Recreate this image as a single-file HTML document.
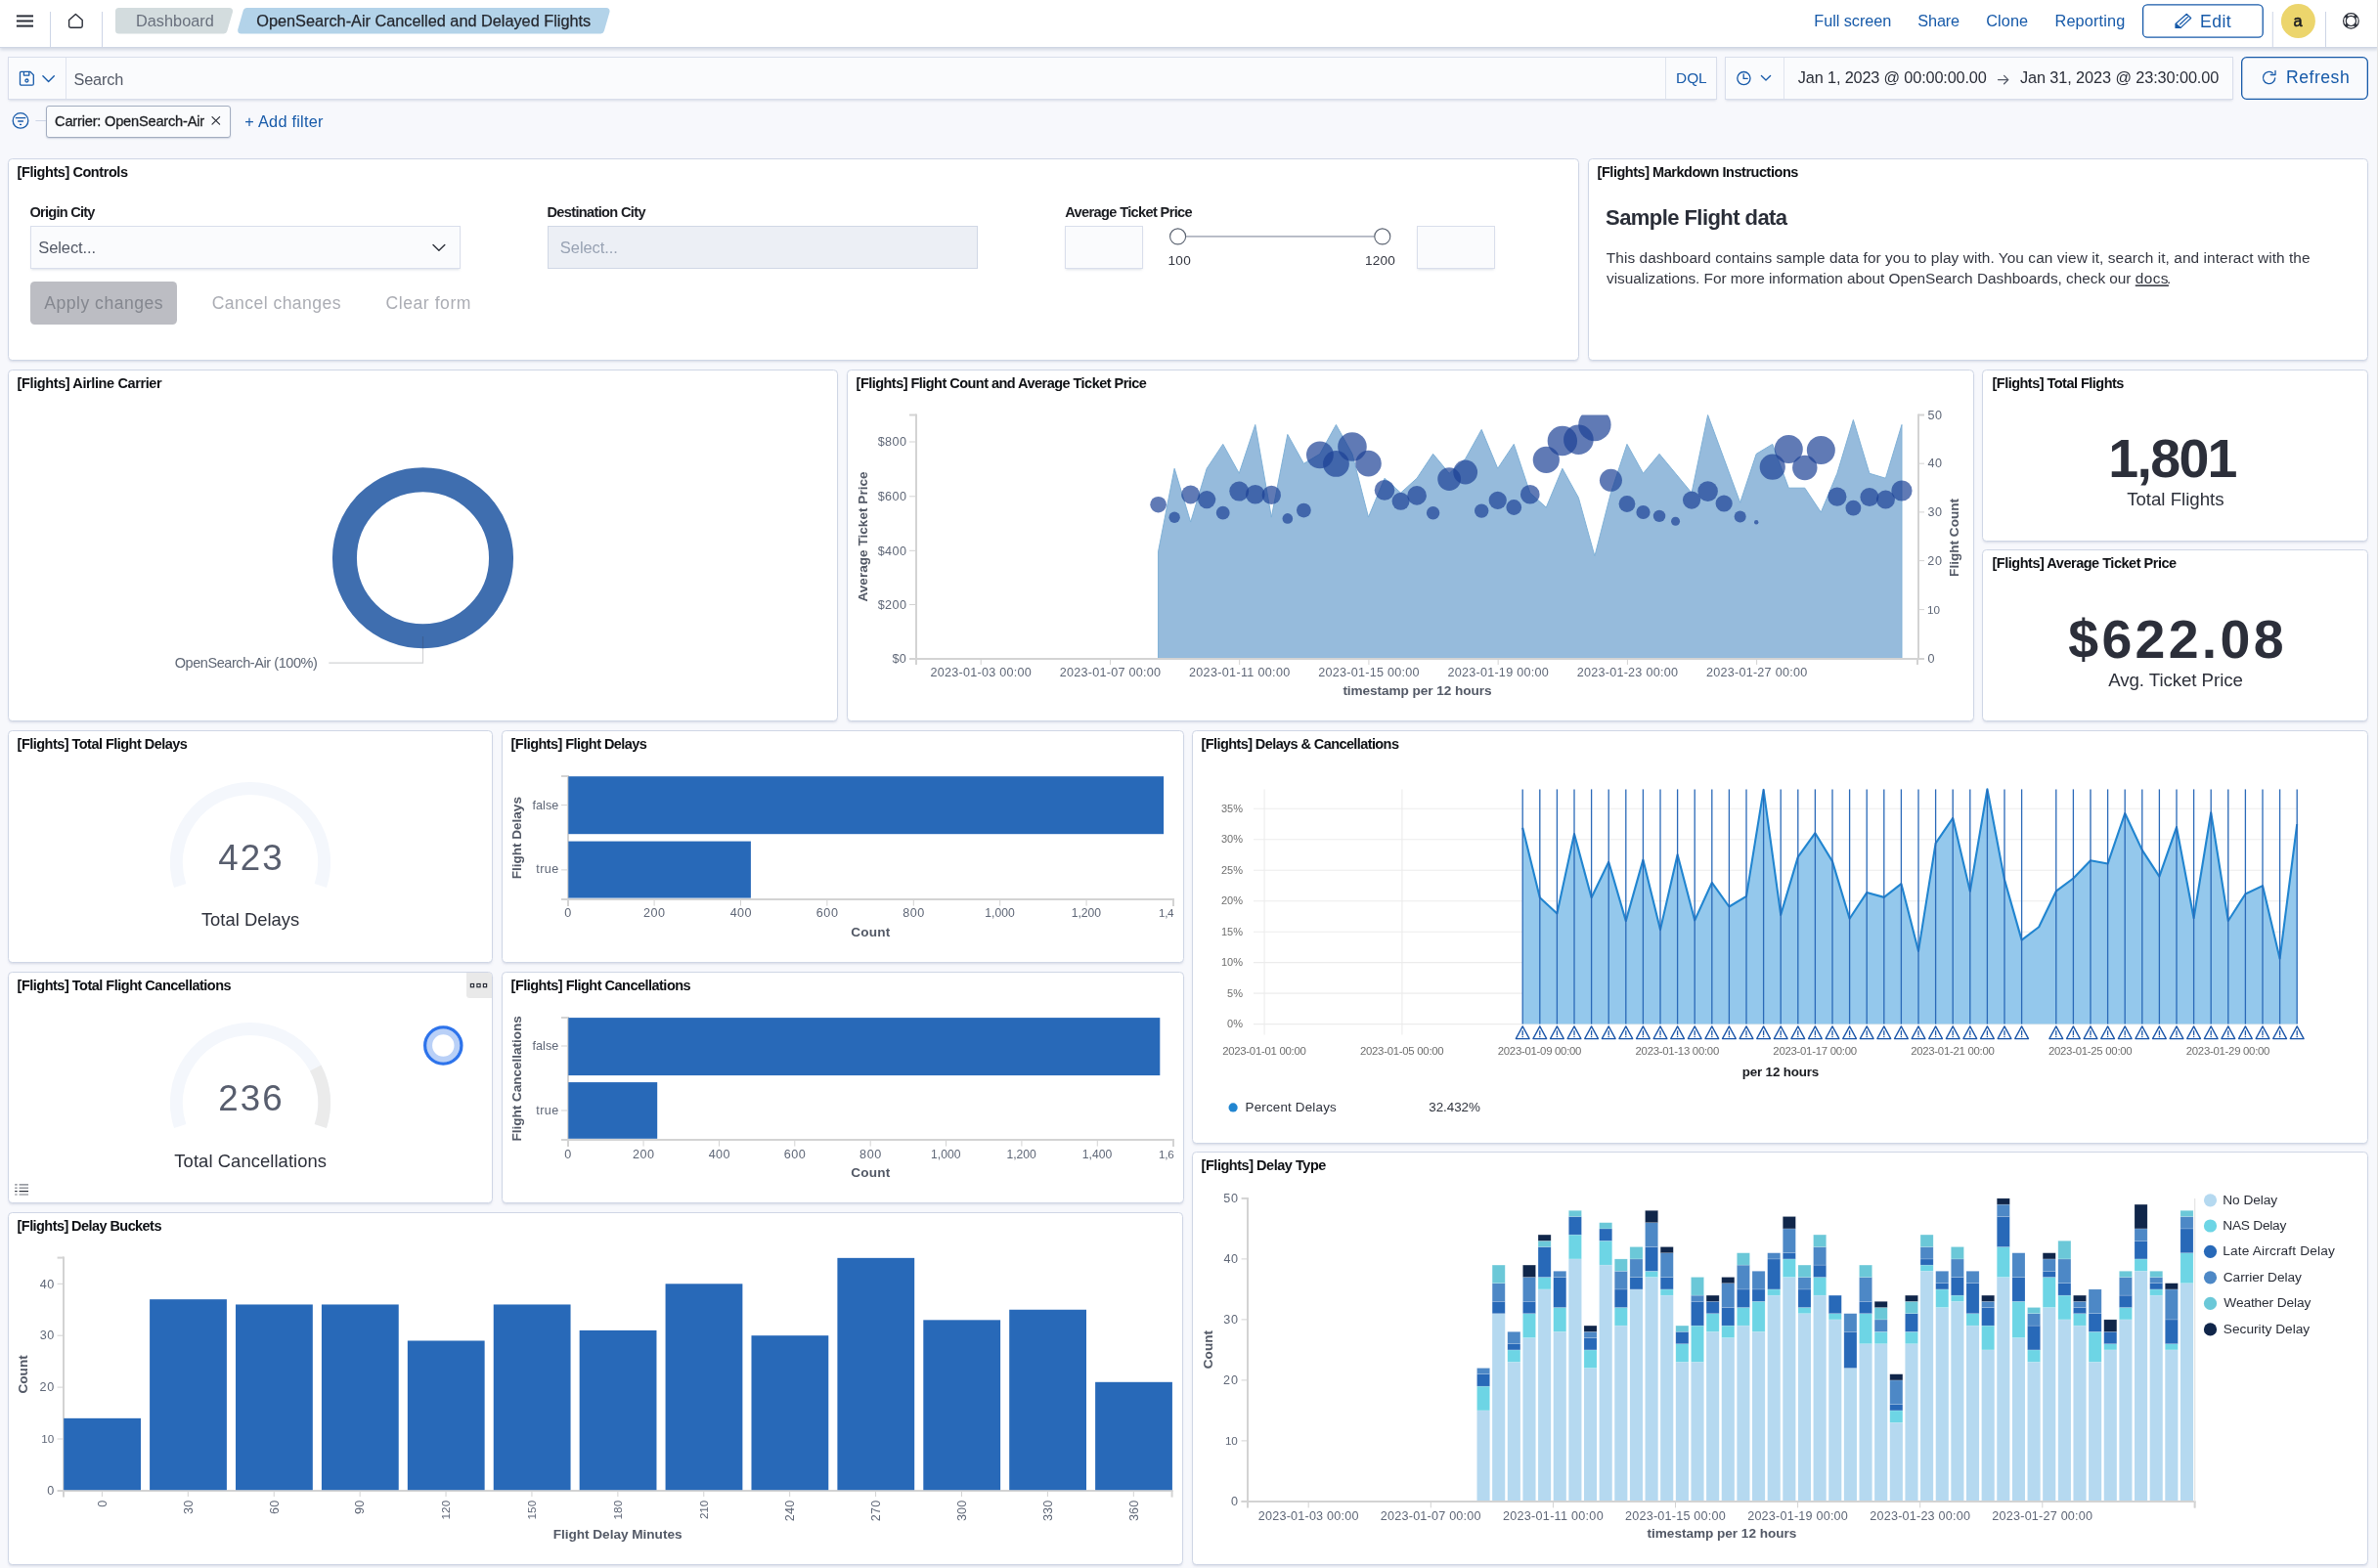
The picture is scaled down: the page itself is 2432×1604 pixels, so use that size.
<!DOCTYPE html>
<html lang="en"><head><meta charset="utf-8"><title>OpenSearch-Air Cancelled and Delayed Flights - OpenSearch Dashboards</title>
<style>
*{box-sizing:border-box;margin:0;padding:0}
html,body{width:2432px;height:1604px;overflow:hidden;background:#f7f8fc;font-family:"Liberation Sans",Arial,sans-serif}
#root{position:relative;width:2432px;height:1604px;overflow:hidden;background:#f7f8fc}
.abs{position:absolute}
.hdr{position:absolute;left:0;top:0;width:2432px;height:49px;background:#fff;border-bottom:1px solid #cfd6e4;box-shadow:0 2px 3px rgba(120,135,165,.28)}
.panel{position:absolute;background:#fff;border:1px solid #cfd6e5;border-radius:4.5px;box-shadow:0 2px 2.5px -1px rgba(110,125,160,.25)}
.inp{position:absolute;background:#fafbfd;border:1px solid #d9deeb;box-shadow:0 2px 2.5px -1px rgba(110,125,160,.24)}
svg text{font-family:"Liberation Sans",Arial,sans-serif}
#ov{position:absolute;left:0;top:0;will-change:transform;transform:translateZ(0)}
</style></head>
<body><div id="root">
<div class="hdr"></div>
<div class="inp" style="left:8px;top:58px;width:1748px;height:44px;"></div>
<div class="inp" style="left:1764px;top:58px;width:520px;height:44px;"></div>
<div class="abs" style="left:47px;top:108px;width:189px;height:33px;background:#fafbfd;border:1px solid #a3adc0;border-radius:3px;box-shadow:0 1px 1.5px rgba(120,135,165,.3)"></div>
<div class="panel" style="left:8px;top:162px;width:1607px;height:207px;"></div>
<div class="panel" style="left:1624px;top:162px;width:798px;height:207px;"></div>
<div class="panel" style="left:8px;top:378px;width:849px;height:360px;"></div>
<div class="panel" style="left:866px;top:378px;width:1153px;height:360px;"></div>
<div class="panel" style="left:2027px;top:378px;width:395px;height:176px;"></div>
<div class="panel" style="left:2027px;top:562px;width:395px;height:176px;"></div>
<div class="panel" style="left:8px;top:747px;width:496px;height:238px;"></div>
<div class="panel" style="left:513px;top:747px;width:698px;height:238px;"></div>
<div class="panel" style="left:1219px;top:747px;width:1203px;height:423px;"></div>
<div class="panel" style="left:8px;top:994px;width:496px;height:237px;"></div>
<div class="panel" style="left:513px;top:994px;width:698px;height:237px;"></div>
<div class="panel" style="left:8px;top:1240px;width:1202px;height:361px;"></div>
<div class="panel" style="left:1219px;top:1178px;width:1203px;height:423px;"></div>
<div class="inp" style="left:31px;top:231px;width:440px;height:44px;"></div>
<div class="abs" style="left:560px;top:231px;width:440px;height:44px;background:#eceff5;border:1px solid #d0d7e5"></div>
<div class="inp" style="left:1089px;top:231px;width:80px;height:44px;"></div>
<div class="inp" style="left:1449px;top:231px;width:80px;height:44px;"></div>
<svg id="ov" width="2432" height="1604" viewBox="0 0 2432 1604">
<line x1="16.90" y1="16.40" x2="34.00" y2="16.40" stroke="#2a2e38" stroke-width="2"/>
<line x1="16.90" y1="21.50" x2="34.00" y2="21.50" stroke="#2a2e38" stroke-width="2"/>
<line x1="16.90" y1="26.60" x2="34.00" y2="26.60" stroke="#2a2e38" stroke-width="2"/>
<line x1="51.50" y1="12.00" x2="51.50" y2="48.00" stroke="#cdd5e6" stroke-width="1"/>
<line x1="104.50" y1="12.00" x2="104.50" y2="48.00" stroke="#cdd5e6" stroke-width="1"/>
<path d="M70.6 20.6 L77.4 14.6 L84.2 20.6 V26.6 Q84.2 28.2 82.6 28.2 H72.2 Q70.6 28.2 70.6 26.6 Z" fill="none" stroke="#2a2e38" stroke-width="1.4" stroke-linejoin="round"/>
<path d="M121.5 11.5 H234.55 L228.96 30.9 H121.5 Z" fill="#d3dcde" stroke="#d3dcde" stroke-width="7" stroke-linejoin="round"/>
<path d="M252.2 11.5 H620.05 L614.46 30.9 H246.65 Z" fill="#b3d3e9" stroke="#b3d3e9" stroke-width="7" stroke-linejoin="round"/>
<text x="138.90" y="27.10" font-size="16.3" letter-spacing="0.039" fill="#69707d">Dashboard</text>
<text x="262.27" y="27.10" font-size="16.3" letter-spacing="-0.005" stroke="#25282f" stroke-width="0.25" fill="#25282f">OpenSearch-Air Cancelled and Delayed Flights</text>
<text x="1855.30" y="26.90" font-size="16.3" letter-spacing="-0.058" fill="#175aa9">Full screen</text>
<text x="1961.37" y="26.90" font-size="16.3" letter-spacing="-0.163" fill="#175aa9">Share</text>
<text x="2031.28" y="26.90" font-size="16.3" letter-spacing="0.081" fill="#175aa9">Clone</text>
<text x="2101.50" y="26.90" font-size="16.3" letter-spacing="0.145" fill="#175aa9">Reporting</text>
<rect x="2191.6" y="4.8" width="122.6" height="33.4" rx="4.5" fill="#fff" stroke="#175aa9" stroke-width="1.3"/>
<g fill="none" stroke="#175aa9" stroke-width="1.15" stroke-linejoin="round" stroke-linecap="round"><path d="M2236.4 14.3 L2240.7 18.5 L2230.2 28.4 H2225.2 V24.2 Z"/><path d="M2229.4 25 L2238 16.9"/><path d="M2225.2 24.2 L2230.2 28.4 H2225.2 Z" fill="#175aa9"/></g>
<text x="2250.09" y="27.50" font-size="17.6" letter-spacing="0.393" fill="#175aa9">Edit</text>
<line x1="2324.30" y1="12.00" x2="2324.30" y2="48.00" stroke="#cdd5e6" stroke-width="1"/>
<circle cx="2350.40" cy="21.50" r="17.50" fill="#ecd56c"/>
<text x="2345.51" y="26.50" font-size="16.3" stroke="#1a1c21" stroke-width="0.55" fill="#1a1c21">a</text>
<line x1="2378.50" y1="12.00" x2="2378.50" y2="48.00" stroke="#cdd5e6" stroke-width="1"/>
<g fill="none" stroke="#2a2e38" stroke-width="1.2"><circle cx="2404.4" cy="21.4" r="7.8"/><circle cx="2404.4" cy="21.4" r="5.1"/><path d="M2400.55 17.55 L2399.1 16.1 M2408.25 17.55 L2409.7 16.1 M2400.55 25.25 L2399.1 26.7 M2408.25 25.25 L2409.7 26.7" stroke-width="3.4"/></g>
<rect x="2431.00" y="0.00" width="1.00" height="1604.00" fill="#e3e3e3"/>
<line x1="67.50" y1="59.00" x2="67.50" y2="101.00" stroke="#dfe4ee" stroke-width="1"/>
<line x1="1703.50" y1="59.00" x2="1703.50" y2="101.00" stroke="#dfe4ee" stroke-width="1"/>
<g transform="translate(19.8 72.7)" fill="none" stroke="#175aa9" stroke-width="1.3" stroke-linejoin="round"><path d="M1.8 0.7 H11.2 L14.5 4 V13 Q14.5 14.5 13 14.5 H2.2 Q0.7 14.5 0.7 13 V1.8 Q0.7 0.7 1.8 0.7 Z"/><path d="M4.6 0.7 V4.4 H10 V0.7"/><circle cx="7.6" cy="9.8" r="1.5"/></g>
<path d="M43.9 77.8 L49.6 83.4 L55.3 77.8" fill="none" stroke="#175aa9" stroke-width="1.4" stroke-linecap="round" stroke-linejoin="round"/>
<text x="75.57" y="87.00" font-size="16.3" letter-spacing="-0.176" fill="#535966">Search</text>
<text x="1714.07" y="85.00" font-size="15.4" letter-spacing="-0.026" fill="#175aa9">DQL</text>
<line x1="1824.50" y1="59.00" x2="1824.50" y2="101.00" stroke="#dfe4ee" stroke-width="1"/>
<g fill="none" stroke="#175aa9" stroke-width="1.3" stroke-linecap="round"><circle cx="1783.4" cy="80.1" r="6.6"/><path d="M1783.2 75.8 V80.4 H1787.2"/></g>
<path d="M1801.4 77.5 L1806 82 L1810.6 77.5" fill="none" stroke="#175aa9" stroke-width="1.3" stroke-linecap="round" stroke-linejoin="round"/>
<text x="1838.86" y="85.00" font-size="16.3" letter-spacing="-0.156" fill="#2a2e38">Jan 1, 2023 @ 00:00:00.00</text>
<path d="M2043.5 81.6 H2053.8 M2049.6 77.4 L2053.8 81.6 L2049.6 85.8" fill="none" stroke="#535966" stroke-width="1.3" stroke-linecap="round" stroke-linejoin="round"/>
<text x="2065.96" y="85.00" font-size="16.3" letter-spacing="-0.096" fill="#2a2e38">Jan 31, 2023 @ 23:30:00.00</text>
<rect x="2292.65" y="58.65" width="128.7" height="42.7" rx="5" fill="#f9fafd" stroke="#175aa9" stroke-width="1.3"/>
<g fill="none" stroke="#175aa9" stroke-width="1.3" stroke-linecap="round" stroke-linejoin="round"><path d="M2326.7 79.9 A6.1 6.1 0 1 1 2324.3 74.7"/><path d="M2327 72.3 V76.5 H2322.3"/></g>
<text x="2337.99" y="84.70" font-size="17.6" letter-spacing="0.518" fill="#175aa9">Refresh</text>
<g fill="none" stroke="#175aa9" stroke-width="1.3"><circle cx="21" cy="123.4" r="7.8"/><path d="M15.8 120.6 H26.3 M18.2 124 H23.9" /><path d="M20 127.4 H22.1" /></g>
<line x1="36.40" y1="123.50" x2="47.00" y2="123.50" stroke="#cdd5e6" stroke-width="1"/>
<text x="56.07" y="129.00" font-size="14.6" letter-spacing="-0.193" stroke="#1a1c21" stroke-width="0.3" fill="#1a1c21">Carrier: OpenSearch-Air</text>
<path d="M217 119.6 L224.6 127.2 M224.6 119.6 L217 127.2" fill="none" stroke="#2a2e38" stroke-width="1.2" stroke-linecap="round"/>
<text x="250.33" y="129.50" font-size="16.3" letter-spacing="0.250" fill="#175aa9">+ Add filter</text>
<text x="17.60" y="180.90" font-size="14.5" font-weight="700" letter-spacing="-0.438" fill="#0f1115">[Flights] Controls</text>
<text x="1633.60" y="180.90" font-size="14.5" font-weight="700" letter-spacing="-0.472" fill="#0f1115">[Flights] Markdown Instructions</text>
<text x="17.60" y="396.90" font-size="14.5" font-weight="700" letter-spacing="-0.391" fill="#0f1115">[Flights] Airline Carrier</text>
<text x="875.60" y="396.90" font-size="14.5" font-weight="700" letter-spacing="-0.532" fill="#0f1115">[Flights] Flight Count and Average Ticket Price</text>
<text x="2037.50" y="396.90" font-size="14.5" font-weight="700" letter-spacing="-0.521" fill="#0f1115">[Flights] Total Flights</text>
<text x="2037.50" y="580.90" font-size="14.5" font-weight="700" letter-spacing="-0.481" fill="#0f1115">[Flights] Average Ticket Price</text>
<text x="17.60" y="765.90" font-size="14.5" font-weight="700" letter-spacing="-0.529" fill="#0f1115">[Flights] Total Flight Delays</text>
<text x="522.60" y="765.90" font-size="14.5" font-weight="700" letter-spacing="-0.551" fill="#0f1115">[Flights] Flight Delays</text>
<text x="1228.60" y="765.90" font-size="14.5" font-weight="700" letter-spacing="-0.594" fill="#0f1115">[Flights] Delays &amp; Cancellations</text>
<text x="17.60" y="1012.90" font-size="14.5" font-weight="700" letter-spacing="-0.501" fill="#0f1115">[Flights] Total Flight Cancellations</text>
<text x="522.60" y="1012.90" font-size="14.5" font-weight="700" letter-spacing="-0.515" fill="#0f1115">[Flights] Flight Cancellations</text>
<text x="17.60" y="1258.90" font-size="14.5" font-weight="700" letter-spacing="-0.568" fill="#0f1115">[Flights] Delay Buckets</text>
<text x="1228.60" y="1196.90" font-size="14.5" font-weight="700" letter-spacing="-0.470" fill="#0f1115">[Flights] Delay Type</text>
<text x="30.52" y="221.50" font-size="14.6" font-weight="700" letter-spacing="-0.769" fill="#1a1c21">Origin City</text>
<text x="559.45" y="221.50" font-size="14.6" font-weight="700" letter-spacing="-0.668" fill="#1a1c21">Destination City</text>
<text x="1089.23" y="221.50" font-size="14.6" font-weight="700" letter-spacing="-0.647" fill="#1a1c21">Average Ticket Price</text>
<text x="39.26" y="259.00" font-size="16.5" letter-spacing="-0.085" fill="#535966">Select...</text>
<path d="M443 250.4 L448.9 256.2 L454.8 250.4" fill="none" stroke="#2a2e38" stroke-width="1.4" stroke-linecap="round" stroke-linejoin="round"/>
<text x="572.86" y="259.00" font-size="16.5" letter-spacing="-0.072" fill="#98a2b3">Select...</text>
<line x1="1204.60" y1="241.90" x2="1413.80" y2="241.90" stroke="#b0b5c0" stroke-width="1.6"/>
<circle cx="1204.60" cy="241.90" r="8.00" fill="#fff" stroke="#5a6270" stroke-width="1.1"/>
<circle cx="1413.80" cy="241.90" r="8.00" fill="#fff" stroke="#5a6270" stroke-width="1.1"/>
<text x="1194.48" y="271.00" font-size="13.6" letter-spacing="0.276" fill="#343741">100</text>
<text x="1395.98" y="271.00" font-size="13.6" letter-spacing="0.235" fill="#343741">1200</text>
<rect x="31" y="288" width="150" height="44" rx="4.5" fill="#bcbdc3"/>
<text x="45.20" y="315.70" font-size="17.6" letter-spacing="0.505" fill="#84878f">Apply changes</text>
<text x="216.72" y="315.70" font-size="17.6" letter-spacing="0.435" fill="#abadb4">Cancel changes</text>
<text x="394.42" y="315.70" font-size="17.6" letter-spacing="0.553" fill="#abadb4">Clear form</text>
<text x="1642.10" y="230.40" font-size="22" font-weight="700" letter-spacing="-0.567" fill="#2a2e38">Sample Flight data</text>
<text x="1642.79" y="268.70" font-size="15.4" letter-spacing="0.075" fill="#343741">This dashboard contains sample data for you to play with. You can view it, search it, and interact with the</text>
<text x="1643.06" y="290.40" font-size="15.4" letter-spacing="-0.034" fill="#343741">visualizations. For more information about OpenSearch Dashboards, check our</text>
<text x="2183.78" y="290.40" font-size="15.4" letter-spacing="0.407" fill="#343741" text-decoration="underline">docs</text>
<text x="2215.91" y="290.40" font-size="15.4" fill="#343741">.</text>
<text x="2156.23" y="487.80" font-size="55.5" font-weight="700" letter-spacing="-1.658" fill="#2c2f3a">1,801</text>
<text x="2175.13" y="517.00" font-size="18.7" letter-spacing="-0.020" fill="#2d303a">Total Flights</text>
<text x="2115.31" y="672.80" font-size="55.5" font-weight="700" letter-spacing="3.271" fill="#2c2f3a">$622.08</text>
<text x="2156.20" y="702.00" font-size="18.7" letter-spacing="-0.069" fill="#2d303a">Avg. Ticket Price</text>
<path d="M184.18 905.95 A75.65 75.65 0 1 1 327.82 905.95" fill="none" stroke="#f4f7fc" stroke-width="12.9"/>
<text x="223.27" y="889.90" font-size="36.7" letter-spacing="2.144" fill="#585e6e">423</text>
<text x="205.93" y="947.10" font-size="18.4" letter-spacing="0.007" fill="#2d303a">Total Delays</text>
<path d="M184.18 1151.95 A75.65 75.65 0 1 1 327.82 1151.95" fill="none" stroke="#f4f7fc" stroke-width="12.9"/>
<path d="M322.67 1092.45 A75.65 75.65 0 0 1 327.82 1151.95" fill="none" stroke="#ebebeb" stroke-width="12.9"/>
<text x="223.36" y="1135.90" font-size="36.7" letter-spacing="2.099" fill="#585e6e">236</text>
<text x="178.33" y="1193.60" font-size="18.4" letter-spacing="0.075" fill="#2d303a">Total Cancellations</text>
<path d="M477 995 H499.5 Q503 995 503 998.5 V1020.9 H480.5 Q477 1020.9 477 1017.4 Z" fill="#e9e9e9"/>
<rect x="481.4" y="1006.5" width="3.2" height="3.2" fill="#fff" stroke="#2a2e38" stroke-width="1.2"/>
<rect x="487.9" y="1006.5" width="3.2" height="3.2" fill="#fff" stroke="#2a2e38" stroke-width="1.2"/>
<rect x="494.4" y="1006.5" width="3.2" height="3.2" fill="#fff" stroke="#2a2e38" stroke-width="1.2"/>
<circle cx="453.30" cy="1069.50" r="14.05" fill="#fff" stroke="#b9d0f7" stroke-width="5.7"/>
<circle cx="453.30" cy="1069.50" r="18.60" fill="none" stroke="#2d73eb" stroke-width="3.3"/>
<line x1="19.60" y1="1211.90" x2="29.00" y2="1211.90" stroke="#6d717a" stroke-width="1.2"/>
<line x1="15.20" y1="1211.90" x2="17.60" y2="1211.90" stroke="#6d717a" stroke-width="1.2"/>
<line x1="19.60" y1="1215.20" x2="29.00" y2="1215.20" stroke="#7a7e86" stroke-width="1.2"/>
<line x1="15.20" y1="1215.20" x2="17.60" y2="1215.20" stroke="#7a7e86" stroke-width="1.2"/>
<line x1="19.60" y1="1218.60" x2="29.00" y2="1218.60" stroke="#2a2e38" stroke-width="1.2"/>
<line x1="15.20" y1="1218.60" x2="17.60" y2="1218.60" stroke="#2a2e38" stroke-width="1.2"/>
<line x1="19.60" y1="1222.00" x2="29.00" y2="1222.00" stroke="#8a8d94" stroke-width="1.2"/>
<line x1="15.20" y1="1222.00" x2="17.60" y2="1222.00" stroke="#8a8d94" stroke-width="1.2"/>
<circle cx="432.50" cy="570.80" r="80.05" fill="none" stroke="#3f6eaf" stroke-width="25"/>
<path d="M432.5 651 V678.2 H336.3" fill="none" stroke="rgba(52,55,65,0.22)" stroke-width="1.2"/>
<text x="178.65" y="682.90" font-size="14.5" letter-spacing="-0.425" fill="#5f6775">OpenSearch-Air (100%)</text>
<path d="M1184.60 673.50 L1184.60 563.94 L1201.13 479.28 L1217.66 534.06 L1234.19 479.28 L1250.72 454.38 L1267.25 484.26 L1283.78 434.46 L1300.31 529.08 L1316.84 444.42 L1333.37 474.30 L1349.90 464.34 L1366.43 434.46 L1382.96 464.34 L1399.49 529.08 L1416.02 489.24 L1432.55 504.18 L1449.08 489.24 L1465.61 464.34 L1482.14 484.26 L1498.67 469.32 L1515.20 439.44 L1531.73 479.28 L1548.26 454.38 L1564.79 504.18 L1581.32 519.12 L1597.85 479.28 L1614.38 509.16 L1630.91 568.92 L1647.44 504.18 L1663.97 454.38 L1680.50 484.26 L1697.03 464.34 L1713.56 484.26 L1730.09 504.18 L1746.62 424.50 L1763.15 469.32 L1779.68 514.14 L1796.21 464.34 L1812.74 454.38 L1829.27 499.20 L1845.80 499.20 L1862.33 524.10 L1878.86 484.26 L1895.39 429.48 L1911.92 484.26 L1928.45 489.24 L1944.98 434.46 L1944.98 673.50 Z" fill="#96bbdc"/>
<path d="M1184.60 563.94 L1201.13 479.28 L1217.66 534.06 L1234.19 479.28 L1250.72 454.38 L1267.25 484.26 L1283.78 434.46 L1300.31 529.08 L1316.84 444.42 L1333.37 474.30 L1349.90 464.34 L1366.43 434.46 L1382.96 464.34 L1399.49 529.08 L1416.02 489.24 L1432.55 504.18 L1449.08 489.24 L1465.61 464.34 L1482.14 484.26 L1498.67 469.32 L1515.20 439.44 L1531.73 479.28 L1548.26 454.38 L1564.79 504.18 L1581.32 519.12 L1597.85 479.28 L1614.38 509.16 L1630.91 568.92 L1647.44 504.18 L1663.97 454.38 L1680.50 484.26 L1697.03 464.34 L1713.56 484.26 L1730.09 504.18 L1746.62 424.50 L1763.15 469.32 L1779.68 514.14 L1796.21 464.34 L1812.74 454.38 L1829.27 499.20 L1845.80 499.20 L1862.33 524.10 L1878.86 484.26 L1895.39 429.48 L1911.92 484.26 L1928.45 489.24 L1944.98 434.46" fill="none" stroke="#7fb0d6" stroke-width="1"/>
<line x1="1184.60" y1="563.94" x2="1184.60" y2="673.50" stroke="#7fb0d6" stroke-width="1"/>
<line x1="1944.98" y1="434.46" x2="1944.98" y2="673.50" stroke="#7fb0d6" stroke-width="1"/>
<clipPath id="fcclip"><rect x="937" y="424.5" width="1025" height="249.5"/></clipPath>
<g clip-path="url(#fcclip)" fill="#1d4295" fill-opacity="0.7">
<circle cx="1184.60" cy="516.20" r="8.30" fill="#1d4295"/>
<circle cx="1201.13" cy="529.20" r="5.70" fill="#1d4295"/>
<circle cx="1217.66" cy="505.90" r="9.50" fill="#1d4295"/>
<circle cx="1234.19" cy="511.10" r="9.10" fill="#1d4295"/>
<circle cx="1250.72" cy="524.70" r="6.90" fill="#1d4295"/>
<circle cx="1267.25" cy="502.60" r="10.00" fill="#1d4295"/>
<circle cx="1283.78" cy="505.70" r="9.80" fill="#1d4295"/>
<circle cx="1300.31" cy="506.40" r="9.60" fill="#1d4295"/>
<circle cx="1316.84" cy="530.40" r="5.30" fill="#1d4295"/>
<circle cx="1333.37" cy="522.10" r="7.40" fill="#1d4295"/>
<circle cx="1349.90" cy="465.30" r="13.90" fill="#1d4295"/>
<circle cx="1366.43" cy="474.40" r="13.40" fill="#1d4295"/>
<circle cx="1382.96" cy="457.00" r="14.80" fill="#1d4295"/>
<circle cx="1399.49" cy="474.10" r="13.30" fill="#1d4295"/>
<circle cx="1416.02" cy="501.40" r="10.30" fill="#1d4295"/>
<circle cx="1432.55" cy="512.80" r="9.00" fill="#1d4295"/>
<circle cx="1449.08" cy="506.90" r="9.80" fill="#1d4295"/>
<circle cx="1465.61" cy="524.80" r="6.70" fill="#1d4295"/>
<circle cx="1482.14" cy="490.10" r="11.90" fill="#1d4295"/>
<circle cx="1498.67" cy="483.00" r="12.40" fill="#1d4295"/>
<circle cx="1515.20" cy="522.60" r="7.20" fill="#1d4295"/>
<circle cx="1531.73" cy="511.90" r="9.10" fill="#1d4295"/>
<circle cx="1548.26" cy="519.00" r="7.90" fill="#1d4295"/>
<circle cx="1564.79" cy="505.70" r="9.80" fill="#1d4295"/>
<circle cx="1581.32" cy="470.40" r="13.60" fill="#1d4295"/>
<circle cx="1597.85" cy="451.00" r="15.20" fill="#1d4295"/>
<circle cx="1614.38" cy="449.80" r="15.30" fill="#1d4295"/>
<circle cx="1630.91" cy="434.50" r="16.70" fill="#1d4295"/>
<circle cx="1647.44" cy="491.30" r="11.50" fill="#1d4295"/>
<circle cx="1663.97" cy="515.50" r="8.40" fill="#1d4295"/>
<circle cx="1680.50" cy="524.00" r="7.10" fill="#1d4295"/>
<circle cx="1697.03" cy="527.90" r="6.20" fill="#1d4295"/>
<circle cx="1713.56" cy="533.30" r="4.50" fill="#1d4295"/>
<circle cx="1730.09" cy="511.60" r="9.10" fill="#1d4295"/>
<circle cx="1746.62" cy="502.60" r="10.30" fill="#1d4295"/>
<circle cx="1763.15" cy="515.00" r="8.60" fill="#1d4295"/>
<circle cx="1779.68" cy="528.60" r="6.00" fill="#1d4295"/>
<circle cx="1796.21" cy="534.30" r="2.20" fill="#1d4295"/>
<circle cx="1812.74" cy="477.70" r="13.10" fill="#1d4295"/>
<circle cx="1829.27" cy="459.60" r="14.50" fill="#1d4295"/>
<circle cx="1845.80" cy="478.50" r="12.70" fill="#1d4295"/>
<circle cx="1862.33" cy="460.50" r="14.50" fill="#1d4295"/>
<circle cx="1878.86" cy="508.10" r="9.60" fill="#1d4295"/>
<circle cx="1895.39" cy="519.70" r="7.90" fill="#1d4295"/>
<circle cx="1911.92" cy="508.50" r="9.50" fill="#1d4295"/>
<circle cx="1928.45" cy="511.10" r="9.50" fill="#1d4295"/>
<circle cx="1944.98" cy="502.00" r="10.60" fill="#1d4295"/>
</g>
<line x1="937.00" y1="423.50" x2="937.00" y2="680.00" stroke="#d3d3d3" stroke-width="2"/>
<line x1="930.00" y1="424.50" x2="937.00" y2="424.50" stroke="#d3d3d3" stroke-width="2"/>
<line x1="930.00" y1="674.00" x2="1968.00" y2="674.00" stroke="#d3d3d3" stroke-width="2"/>
<line x1="1962.00" y1="423.50" x2="1962.00" y2="675.00" stroke="#d3d3d3" stroke-width="2"/>
<line x1="1961.00" y1="674.00" x2="1961.00" y2="680.00" stroke="#d3d3d3" stroke-width="2"/>
<line x1="1962.00" y1="424.50" x2="1968.00" y2="424.50" stroke="#d3d3d3" stroke-width="2"/>
<line x1="930.00" y1="452.00" x2="937.00" y2="452.00" stroke="#d3d3d3" stroke-width="1"/>
<text x="897.72" y="456.20" font-size="12.6" letter-spacing="0.382" fill="#5f6777">$800</text>
<line x1="930.00" y1="507.80" x2="937.00" y2="507.80" stroke="#d3d3d3" stroke-width="1"/>
<text x="897.72" y="512.00" font-size="12.6" letter-spacing="0.382" fill="#5f6777">$600</text>
<line x1="930.00" y1="563.30" x2="937.00" y2="563.30" stroke="#d3d3d3" stroke-width="1"/>
<text x="897.72" y="567.50" font-size="12.6" letter-spacing="0.382" fill="#5f6777">$400</text>
<line x1="930.00" y1="618.50" x2="937.00" y2="618.50" stroke="#d3d3d3" stroke-width="1"/>
<text x="897.72" y="622.70" font-size="12.6" letter-spacing="0.382" fill="#5f6777">$200</text>
<text x="912.42" y="677.70" font-size="12.6" letter-spacing="0.462" fill="#5f6777">$0</text>
<text x="1971.40" y="428.70" font-size="12.6" letter-spacing="0.690" fill="#5f6777">50</text>
<line x1="1962.00" y1="474.20" x2="1968.00" y2="474.20" stroke="#d3d3d3" stroke-width="1"/>
<text x="1971.62" y="478.40" font-size="12.6" letter-spacing="0.470" fill="#5f6777">40</text>
<line x1="1962.00" y1="523.90" x2="1968.00" y2="523.90" stroke="#d3d3d3" stroke-width="1"/>
<text x="1971.43" y="528.10" font-size="12.6" letter-spacing="0.659" fill="#5f6777">30</text>
<line x1="1962.00" y1="573.60" x2="1968.00" y2="573.60" stroke="#d3d3d3" stroke-width="1"/>
<text x="1971.27" y="577.80" font-size="12.6" letter-spacing="0.816" fill="#5f6777">20</text>
<line x1="1962.00" y1="623.60" x2="1968.00" y2="623.60" stroke="#d3d3d3" stroke-width="1"/>
<text x="1971.02" y="627.80" font-size="11.718" letter-spacing="-0.139" fill="#5f6777">10</text>
<text x="1971.43" y="677.70" font-size="12.6" fill="#5f6777">0</text>
<line x1="1003.20" y1="674.00" x2="1003.20" y2="680.00" stroke="#d3d3d3" stroke-width="1"/>
<text x="951.47" y="691.90" font-size="12.6" letter-spacing="0.255" fill="#5f6777">2023-01-03 00:00</text>
<line x1="1135.44" y1="674.00" x2="1135.44" y2="680.00" stroke="#d3d3d3" stroke-width="1"/>
<text x="1083.71" y="691.90" font-size="12.6" letter-spacing="0.255" fill="#5f6777">2023-01-07 00:00</text>
<line x1="1267.68" y1="674.00" x2="1267.68" y2="680.00" stroke="#d3d3d3" stroke-width="1"/>
<text x="1215.95" y="691.90" font-size="12.6" letter-spacing="0.318" fill="#5f6777">2023-01-11 00:00</text>
<line x1="1399.92" y1="674.00" x2="1399.92" y2="680.00" stroke="#d3d3d3" stroke-width="1"/>
<text x="1348.19" y="691.90" font-size="12.6" letter-spacing="0.255" fill="#5f6777">2023-01-15 00:00</text>
<line x1="1532.16" y1="674.00" x2="1532.16" y2="680.00" stroke="#d3d3d3" stroke-width="1"/>
<text x="1480.43" y="691.90" font-size="12.6" letter-spacing="0.255" fill="#5f6777">2023-01-19 00:00</text>
<line x1="1664.40" y1="674.00" x2="1664.40" y2="680.00" stroke="#d3d3d3" stroke-width="1"/>
<text x="1612.67" y="691.90" font-size="12.6" letter-spacing="0.255" fill="#5f6777">2023-01-23 00:00</text>
<line x1="1796.64" y1="674.00" x2="1796.64" y2="680.00" stroke="#d3d3d3" stroke-width="1"/>
<text x="1744.91" y="691.90" font-size="12.6" letter-spacing="0.255" fill="#5f6777">2023-01-27 00:00</text>
<text x="1373.41" y="710.60" font-size="13.6" font-weight="700" letter-spacing="-0.060" fill="#535966">timestamp per 12 hours</text>
<text transform="translate(886.60 615.59) rotate(-90)" font-size="13.6" font-weight="700" letter-spacing="0.013" fill="#535966">Average Ticket Price</text>
<text transform="translate(2002.60 589.88) rotate(-90)" font-size="13.6" font-weight="700" letter-spacing="-0.005" fill="#535966">Flight Count</text>
<line x1="581.00" y1="793.00" x2="581.00" y2="927.00" stroke="#d3d3d3" stroke-width="2"/>
<line x1="574.00" y1="794.00" x2="581.00" y2="794.00" stroke="#d3d3d3" stroke-width="2"/>
<line x1="574.00" y1="920.00" x2="1201.00" y2="920.00" stroke="#d3d3d3" stroke-width="2"/>
<line x1="1200.00" y1="920.00" x2="1200.00" y2="927.00" stroke="#d3d3d3" stroke-width="2"/>
<rect x="581.30" y="794.20" width="608.80" height="59.00" fill="#2869b8"/>
<rect x="581.30" y="860.60" width="186.60" height="58.00" fill="#2869b8"/>
<text x="577.20" y="938.40" font-size="12.6" fill="#5f6777">0</text>
<line x1="669.10" y1="920.00" x2="669.10" y2="926.60" stroke="#d3d3d3" stroke-width="1"/>
<text x="657.95" y="938.40" font-size="12.6" letter-spacing="0.571" fill="#5f6777">200</text>
<line x1="757.50" y1="920.00" x2="757.50" y2="926.60" stroke="#d3d3d3" stroke-width="1"/>
<text x="746.69" y="938.40" font-size="12.6" letter-spacing="0.398" fill="#5f6777">400</text>
<line x1="845.90" y1="920.00" x2="845.90" y2="926.60" stroke="#d3d3d3" stroke-width="1"/>
<text x="834.75" y="938.40" font-size="12.6" letter-spacing="0.571" fill="#5f6777">600</text>
<line x1="934.30" y1="920.00" x2="934.30" y2="926.60" stroke="#d3d3d3" stroke-width="1"/>
<text x="923.24" y="938.40" font-size="12.6" letter-spacing="0.524" fill="#5f6777">800</text>
<line x1="1022.70" y1="920.00" x2="1022.70" y2="926.60" stroke="#d3d3d3" stroke-width="1"/>
<text x="1007.26" y="938.40" font-size="12.1548" fill="#5f6777">1,000</text>
<line x1="1111.10" y1="920.00" x2="1111.10" y2="926.60" stroke="#d3d3d3" stroke-width="1"/>
<text x="1095.66" y="938.40" font-size="12.1548" fill="#5f6777">1,200</text>
<text x="1185.07" y="938.40" font-size="11.718" letter-spacing="-0.368" fill="#5f6777">1,4</text>
<text x="870.36" y="957.80" font-size="13.6" font-weight="700" letter-spacing="0.152" fill="#535966">Count</text>
<line x1="574.00" y1="823.60" x2="580.00" y2="823.60" stroke="#d3d3d3" stroke-width="1"/>
<line x1="574.00" y1="889.90" x2="580.00" y2="889.90" stroke="#d3d3d3" stroke-width="1"/>
<text x="544.44" y="827.70" font-size="12.6" letter-spacing="0.077" fill="#5f6777">false</text>
<text x="548.21" y="893.40" font-size="12.6" letter-spacing="0.474" fill="#5f6777">true</text>
<text transform="translate(533.20 899.33) rotate(-90)" font-size="13.6" font-weight="700" letter-spacing="-0.028" fill="#535966">Flight Delays</text>
<line x1="581.00" y1="1040.00" x2="581.00" y2="1173.00" stroke="#d3d3d3" stroke-width="2"/>
<line x1="574.00" y1="1041.00" x2="581.00" y2="1041.00" stroke="#d3d3d3" stroke-width="2"/>
<line x1="574.00" y1="1166.00" x2="1201.00" y2="1166.00" stroke="#d3d3d3" stroke-width="2"/>
<line x1="1200.00" y1="1166.00" x2="1200.00" y2="1173.00" stroke="#d3d3d3" stroke-width="2"/>
<rect x="581.30" y="1041.10" width="605.00" height="59.00" fill="#2869b8"/>
<rect x="581.30" y="1107.10" width="90.90" height="57.70" fill="#2869b8"/>
<text x="577.20" y="1184.60" font-size="12.6" fill="#5f6777">0</text>
<line x1="658.07" y1="1166.00" x2="658.07" y2="1172.60" stroke="#d3d3d3" stroke-width="1"/>
<text x="646.92" y="1184.60" font-size="12.6" letter-spacing="0.571" fill="#5f6777">200</text>
<line x1="735.44" y1="1166.00" x2="735.44" y2="1172.60" stroke="#d3d3d3" stroke-width="1"/>
<text x="724.63" y="1184.60" font-size="12.6" letter-spacing="0.398" fill="#5f6777">400</text>
<line x1="812.81" y1="1166.00" x2="812.81" y2="1172.60" stroke="#d3d3d3" stroke-width="1"/>
<text x="801.66" y="1184.60" font-size="12.6" letter-spacing="0.571" fill="#5f6777">600</text>
<line x1="890.18" y1="1166.00" x2="890.18" y2="1172.60" stroke="#d3d3d3" stroke-width="1"/>
<text x="879.12" y="1184.60" font-size="12.6" letter-spacing="0.524" fill="#5f6777">800</text>
<line x1="967.55" y1="1166.00" x2="967.55" y2="1172.60" stroke="#d3d3d3" stroke-width="1"/>
<text x="952.11" y="1184.60" font-size="12.1548" fill="#5f6777">1,000</text>
<line x1="1044.92" y1="1166.00" x2="1044.92" y2="1172.60" stroke="#d3d3d3" stroke-width="1"/>
<text x="1029.48" y="1184.60" font-size="12.1548" fill="#5f6777">1,200</text>
<line x1="1122.29" y1="1166.00" x2="1122.29" y2="1172.60" stroke="#d3d3d3" stroke-width="1"/>
<text x="1106.85" y="1184.60" font-size="12.1548" fill="#5f6777">1,400</text>
<text x="1185.07" y="1184.60" font-size="11.718" letter-spacing="-0.281" fill="#5f6777">1,6</text>
<text x="870.36" y="1203.70" font-size="13.6" font-weight="700" letter-spacing="0.152" fill="#535966">Count</text>
<line x1="574.00" y1="1070.00" x2="580.00" y2="1070.00" stroke="#d3d3d3" stroke-width="1"/>
<line x1="574.00" y1="1136.00" x2="580.00" y2="1136.00" stroke="#d3d3d3" stroke-width="1"/>
<text x="544.44" y="1073.90" font-size="12.6" letter-spacing="0.077" fill="#5f6777">false</text>
<text x="548.21" y="1139.90" font-size="12.6" letter-spacing="0.474" fill="#5f6777">true</text>
<text transform="translate(533.20 1167.53) rotate(-90)" font-size="13.6" font-weight="700" letter-spacing="-0.048" fill="#535966">Flight Cancellations</text>
<line x1="65.00" y1="1285.60" x2="65.00" y2="1531.60" stroke="#d3d3d3" stroke-width="2"/>
<line x1="58.60" y1="1286.60" x2="65.00" y2="1286.60" stroke="#d3d3d3" stroke-width="2"/>
<line x1="58.60" y1="1525.00" x2="1199.60" y2="1525.00" stroke="#d3d3d3" stroke-width="2"/>
<line x1="1198.60" y1="1525.00" x2="1198.60" y2="1531.60" stroke="#d3d3d3" stroke-width="2"/>
<text x="48.28" y="1529.10" font-size="12.6" fill="#5f6777">0</text>
<line x1="58.60" y1="1472.00" x2="64.90" y2="1472.00" stroke="#d3d3d3" stroke-width="1"/>
<text x="42.37" y="1476.20" font-size="11.718" letter-spacing="-0.139" fill="#5f6777">10</text>
<line x1="58.60" y1="1419.10" x2="64.90" y2="1419.10" stroke="#d3d3d3" stroke-width="1"/>
<text x="40.47" y="1423.30" font-size="12.6" letter-spacing="0.816" fill="#5f6777">20</text>
<line x1="58.60" y1="1366.20" x2="64.90" y2="1366.20" stroke="#d3d3d3" stroke-width="1"/>
<text x="40.63" y="1370.40" font-size="12.6" letter-spacing="0.659" fill="#5f6777">30</text>
<line x1="58.60" y1="1313.30" x2="64.90" y2="1313.30" stroke="#d3d3d3" stroke-width="1"/>
<text x="40.82" y="1317.50" font-size="12.6" letter-spacing="0.470" fill="#5f6777">40</text>
<rect x="65.20" y="1450.84" width="78.80" height="73.36" fill="#2869b8"/>
<line x1="104.40" y1="1525.00" x2="104.40" y2="1531.00" stroke="#d3d3d3" stroke-width="1"/>
<text transform="translate(108.70 1541.72) rotate(-90)" font-size="12.6" fill="#5f6777">0</text>
<rect x="153.11" y="1329.17" width="78.80" height="195.03" fill="#2869b8"/>
<line x1="192.31" y1="1525.00" x2="192.31" y2="1531.00" stroke="#d3d3d3" stroke-width="1"/>
<text transform="translate(196.61 1548.96) rotate(-90)" font-size="12.6" letter-spacing="0.248" fill="#5f6777">30</text>
<rect x="241.02" y="1334.46" width="78.80" height="189.74" fill="#2869b8"/>
<line x1="280.22" y1="1525.00" x2="280.22" y2="1531.00" stroke="#d3d3d3" stroke-width="1"/>
<text transform="translate(284.52 1549.12) rotate(-90)" font-size="12.6" letter-spacing="0.405" fill="#5f6777">60</text>
<rect x="328.93" y="1334.46" width="78.80" height="189.74" fill="#2869b8"/>
<line x1="368.13" y1="1525.00" x2="368.13" y2="1531.00" stroke="#d3d3d3" stroke-width="1"/>
<text transform="translate(372.43 1549.06) rotate(-90)" font-size="12.6" letter-spacing="0.342" fill="#5f6777">90</text>
<rect x="416.84" y="1371.49" width="78.80" height="152.71" fill="#2869b8"/>
<line x1="456.04" y1="1525.00" x2="456.04" y2="1531.00" stroke="#d3d3d3" stroke-width="1"/>
<text transform="translate(460.34 1554.42) rotate(-90)" font-size="11.7897" fill="#5f6777">120</text>
<rect x="504.75" y="1334.46" width="78.80" height="189.74" fill="#2869b8"/>
<line x1="543.95" y1="1525.00" x2="543.95" y2="1531.00" stroke="#d3d3d3" stroke-width="1"/>
<text transform="translate(548.25 1554.42) rotate(-90)" font-size="11.7897" fill="#5f6777">150</text>
<rect x="592.66" y="1360.91" width="78.80" height="163.29" fill="#2869b8"/>
<line x1="631.86" y1="1525.00" x2="631.86" y2="1531.00" stroke="#d3d3d3" stroke-width="1"/>
<text transform="translate(636.16 1554.42) rotate(-90)" font-size="11.7897" fill="#5f6777">180</text>
<rect x="680.57" y="1313.30" width="78.80" height="210.90" fill="#2869b8"/>
<line x1="719.77" y1="1525.00" x2="719.77" y2="1531.00" stroke="#d3d3d3" stroke-width="1"/>
<text transform="translate(724.07 1554.12) rotate(-90)" font-size="11.718" letter-spacing="-0.091" fill="#5f6777">210</text>
<rect x="768.48" y="1366.20" width="78.80" height="158.00" fill="#2869b8"/>
<line x1="807.68" y1="1525.00" x2="807.68" y2="1531.00" stroke="#d3d3d3" stroke-width="1"/>
<text transform="translate(811.98 1556.25) rotate(-90)" font-size="12.6" letter-spacing="0.255" fill="#5f6777">240</text>
<rect x="856.39" y="1286.85" width="78.80" height="237.35" fill="#2869b8"/>
<line x1="895.59" y1="1525.00" x2="895.59" y2="1531.00" stroke="#d3d3d3" stroke-width="1"/>
<text transform="translate(899.89 1556.25) rotate(-90)" font-size="12.6" letter-spacing="0.255" fill="#5f6777">270</text>
<rect x="944.30" y="1350.33" width="78.80" height="173.87" fill="#2869b8"/>
<line x1="983.50" y1="1525.00" x2="983.50" y2="1531.00" stroke="#d3d3d3" stroke-width="1"/>
<text transform="translate(987.80 1556.09) rotate(-90)" font-size="12.6" letter-spacing="0.176" fill="#5f6777">300</text>
<rect x="1032.21" y="1339.75" width="78.80" height="184.45" fill="#2869b8"/>
<line x1="1071.41" y1="1525.00" x2="1071.41" y2="1531.00" stroke="#d3d3d3" stroke-width="1"/>
<text transform="translate(1075.71 1556.09) rotate(-90)" font-size="12.6" letter-spacing="0.176" fill="#5f6777">330</text>
<rect x="1120.12" y="1413.81" width="78.80" height="110.39" fill="#2869b8"/>
<line x1="1159.32" y1="1525.00" x2="1159.32" y2="1531.00" stroke="#d3d3d3" stroke-width="1"/>
<text transform="translate(1163.62 1556.09) rotate(-90)" font-size="12.6" letter-spacing="0.176" fill="#5f6777">360</text>
<text x="565.67" y="1573.60" font-size="13.6" font-weight="700" letter-spacing="-0.017" fill="#535966">Flight Delay Minutes</text>
<text transform="translate(27.90 1425.54) rotate(-90)" font-size="13.6" font-weight="700" letter-spacing="0.002" fill="#535966">Count</text>
<line x1="1282.00" y1="1047.60" x2="2349.40" y2="1047.60" stroke="#ececec" stroke-width="1.1"/>
<text x="1255.09" y="1051.30" font-size="11" fill="#6e6e6e">0%</text>
<line x1="1282.00" y1="1016.13" x2="2349.40" y2="1016.13" stroke="#ececec" stroke-width="1.1"/>
<text x="1255.09" y="1019.83" font-size="11" fill="#6e6e6e">5%</text>
<line x1="1282.00" y1="984.66" x2="2349.40" y2="984.66" stroke="#ececec" stroke-width="1.1"/>
<text x="1248.96" y="988.36" font-size="11" fill="#6e6e6e">10%</text>
<line x1="1282.00" y1="953.19" x2="2349.40" y2="953.19" stroke="#ececec" stroke-width="1.1"/>
<text x="1248.96" y="956.89" font-size="11" fill="#6e6e6e">15%</text>
<line x1="1282.00" y1="921.72" x2="2349.40" y2="921.72" stroke="#ececec" stroke-width="1.1"/>
<text x="1248.96" y="925.42" font-size="11" fill="#6e6e6e">20%</text>
<line x1="1282.00" y1="890.25" x2="2349.40" y2="890.25" stroke="#ececec" stroke-width="1.1"/>
<text x="1248.96" y="893.95" font-size="11" fill="#6e6e6e">25%</text>
<line x1="1282.00" y1="858.78" x2="2349.40" y2="858.78" stroke="#ececec" stroke-width="1.1"/>
<text x="1248.96" y="862.48" font-size="11" fill="#6e6e6e">30%</text>
<line x1="1282.00" y1="827.31" x2="2349.40" y2="827.31" stroke="#ececec" stroke-width="1.1"/>
<text x="1248.96" y="831.01" font-size="11" fill="#6e6e6e">35%</text>
<line x1="1293.10" y1="807.40" x2="1293.10" y2="1058.60" stroke="#ececec" stroke-width="1.1"/>
<text x="1250.13" y="1078.80" font-size="11.4" letter-spacing="-0.280" fill="#6e6e6e">2023-01-01 00:00</text>
<line x1="1433.90" y1="807.40" x2="1433.90" y2="1058.60" stroke="#ececec" stroke-width="1.1"/>
<text x="1390.93" y="1078.80" font-size="11.4" letter-spacing="-0.280" fill="#6e6e6e">2023-01-05 00:00</text>
<line x1="1574.70" y1="807.40" x2="1574.70" y2="1058.60" stroke="#ececec" stroke-width="1.1"/>
<text x="1531.73" y="1078.80" font-size="11.4" letter-spacing="-0.280" fill="#6e6e6e">2023-01-09 00:00</text>
<line x1="1715.50" y1="807.40" x2="1715.50" y2="1058.60" stroke="#ececec" stroke-width="1.1"/>
<text x="1672.53" y="1078.80" font-size="11.4" letter-spacing="-0.280" fill="#6e6e6e">2023-01-13 00:00</text>
<line x1="1856.30" y1="807.40" x2="1856.30" y2="1058.60" stroke="#ececec" stroke-width="1.1"/>
<text x="1813.33" y="1078.80" font-size="11.4" letter-spacing="-0.280" fill="#6e6e6e">2023-01-17 00:00</text>
<line x1="1997.10" y1="807.40" x2="1997.10" y2="1058.60" stroke="#ececec" stroke-width="1.1"/>
<text x="1954.13" y="1078.80" font-size="11.4" letter-spacing="-0.280" fill="#6e6e6e">2023-01-21 00:00</text>
<line x1="2137.90" y1="807.40" x2="2137.90" y2="1058.60" stroke="#ececec" stroke-width="1.1"/>
<text x="2094.93" y="1078.80" font-size="11.4" letter-spacing="-0.280" fill="#6e6e6e">2023-01-25 00:00</text>
<line x1="2278.70" y1="807.40" x2="2278.70" y2="1058.60" stroke="#ececec" stroke-width="1.1"/>
<text x="2235.73" y="1078.80" font-size="11.4" letter-spacing="-0.280" fill="#6e6e6e">2023-01-29 00:00</text>
<path d="M1557.20 1047.60 L1557.20 846.82 L1574.80 918.26 L1592.40 934.50 L1610.00 853.12 L1627.60 918.26 L1645.20 881.75 L1662.80 942.11 L1680.40 879.55 L1698.00 951.11 L1715.60 874.20 L1733.20 941.55 L1750.80 902.84 L1768.40 927.51 L1786.00 916.81 L1803.60 807.92 L1821.20 935.88 L1838.80 876.65 L1856.40 852.23 L1874.00 881.12 L1891.60 939.78 L1909.20 913.10 L1926.80 917.88 L1944.40 904.10 L1962.00 972.89 L1979.60 862.62 L1997.20 836.81 L2014.80 911.71 L2032.40 807.30 L2050.00 899.88 L2067.60 961.62 L2085.20 948.22 L2102.80 911.71 L2120.40 898.50 L2138.00 880.31 L2155.60 883.58 L2173.20 832.03 L2190.80 869.61 L2208.40 896.61 L2226.00 846.07 L2243.60 939.22 L2261.20 831.21 L2278.80 941.99 L2296.40 914.48 L2314.00 906.11 L2331.60 980.69 L2349.20 843.04 L2349.20 1047.60 Z" fill="#94c8ec"/>
<path d="M1557.20 846.82 L1574.80 918.26 L1592.40 934.50 L1610.00 853.12 L1627.60 918.26 L1645.20 881.75 L1662.80 942.11 L1680.40 879.55 L1698.00 951.11 L1715.60 874.20 L1733.20 941.55 L1750.80 902.84 L1768.40 927.51 L1786.00 916.81 L1803.60 807.92 L1821.20 935.88 L1838.80 876.65 L1856.40 852.23 L1874.00 881.12 L1891.60 939.78 L1909.20 913.10 L1926.80 917.88 L1944.40 904.10 L1962.00 972.89 L1979.60 862.62 L1997.20 836.81 L2014.80 911.71 L2032.40 807.30 L2050.00 899.88 L2067.60 961.62 L2085.20 948.22 L2102.80 911.71 L2120.40 898.50 L2138.00 880.31 L2155.60 883.58 L2173.20 832.03 L2190.80 869.61 L2208.40 896.61 L2226.00 846.07 L2243.60 939.22 L2261.20 831.21 L2278.80 941.99 L2296.40 914.48 L2314.00 906.11 L2331.60 980.69 L2349.20 843.04" fill="none" stroke="#2185d0" stroke-width="2.1" stroke-linejoin="round"/>
<g>
<line x1="1557.20" y1="807.40" x2="1557.20" y2="1047.60" stroke="#2a69b8" stroke-width="1.3"/>
<path d="M1557.20 1049.90 L1564.10 1062.60 H1550.30 Z" fill="#fff" stroke="#1a55a8" stroke-width="1.35" stroke-linejoin="round"/>
<path d="M1557.20 1054.20 V1059.20 M1557.20 1060.10 V1061.20" stroke="#1a55a8" stroke-width="1.3" fill="none"/>
<line x1="1574.80" y1="807.40" x2="1574.80" y2="1047.60" stroke="#2a69b8" stroke-width="1.3"/>
<path d="M1574.80 1049.90 L1581.70 1062.60 H1567.90 Z" fill="#fff" stroke="#1a55a8" stroke-width="1.35" stroke-linejoin="round"/>
<path d="M1574.80 1054.20 V1059.20 M1574.80 1060.10 V1061.20" stroke="#1a55a8" stroke-width="1.3" fill="none"/>
<line x1="1592.40" y1="807.40" x2="1592.40" y2="1047.60" stroke="#2a69b8" stroke-width="1.3"/>
<path d="M1592.40 1049.90 L1599.30 1062.60 H1585.50 Z" fill="#fff" stroke="#1a55a8" stroke-width="1.35" stroke-linejoin="round"/>
<path d="M1592.40 1054.20 V1059.20 M1592.40 1060.10 V1061.20" stroke="#1a55a8" stroke-width="1.3" fill="none"/>
<line x1="1610.00" y1="807.40" x2="1610.00" y2="1047.60" stroke="#2a69b8" stroke-width="1.3"/>
<path d="M1610.00 1049.90 L1616.90 1062.60 H1603.10 Z" fill="#fff" stroke="#1a55a8" stroke-width="1.35" stroke-linejoin="round"/>
<path d="M1610.00 1054.20 V1059.20 M1610.00 1060.10 V1061.20" stroke="#1a55a8" stroke-width="1.3" fill="none"/>
<line x1="1627.60" y1="807.40" x2="1627.60" y2="1047.60" stroke="#2a69b8" stroke-width="1.3"/>
<path d="M1627.60 1049.90 L1634.50 1062.60 H1620.70 Z" fill="#fff" stroke="#1a55a8" stroke-width="1.35" stroke-linejoin="round"/>
<path d="M1627.60 1054.20 V1059.20 M1627.60 1060.10 V1061.20" stroke="#1a55a8" stroke-width="1.3" fill="none"/>
<line x1="1645.20" y1="807.40" x2="1645.20" y2="1047.60" stroke="#2a69b8" stroke-width="1.3"/>
<path d="M1645.20 1049.90 L1652.10 1062.60 H1638.30 Z" fill="#fff" stroke="#1a55a8" stroke-width="1.35" stroke-linejoin="round"/>
<path d="M1645.20 1054.20 V1059.20 M1645.20 1060.10 V1061.20" stroke="#1a55a8" stroke-width="1.3" fill="none"/>
<line x1="1662.80" y1="807.40" x2="1662.80" y2="1047.60" stroke="#2a69b8" stroke-width="1.3"/>
<path d="M1662.80 1049.90 L1669.70 1062.60 H1655.90 Z" fill="#fff" stroke="#1a55a8" stroke-width="1.35" stroke-linejoin="round"/>
<path d="M1662.80 1054.20 V1059.20 M1662.80 1060.10 V1061.20" stroke="#1a55a8" stroke-width="1.3" fill="none"/>
<line x1="1680.40" y1="807.40" x2="1680.40" y2="1047.60" stroke="#2a69b8" stroke-width="1.3"/>
<path d="M1680.40 1049.90 L1687.30 1062.60 H1673.50 Z" fill="#fff" stroke="#1a55a8" stroke-width="1.35" stroke-linejoin="round"/>
<path d="M1680.40 1054.20 V1059.20 M1680.40 1060.10 V1061.20" stroke="#1a55a8" stroke-width="1.3" fill="none"/>
<line x1="1698.00" y1="807.40" x2="1698.00" y2="1047.60" stroke="#2a69b8" stroke-width="1.3"/>
<path d="M1698.00 1049.90 L1704.90 1062.60 H1691.10 Z" fill="#fff" stroke="#1a55a8" stroke-width="1.35" stroke-linejoin="round"/>
<path d="M1698.00 1054.20 V1059.20 M1698.00 1060.10 V1061.20" stroke="#1a55a8" stroke-width="1.3" fill="none"/>
<line x1="1715.60" y1="807.40" x2="1715.60" y2="1047.60" stroke="#2a69b8" stroke-width="1.3"/>
<path d="M1715.60 1049.90 L1722.50 1062.60 H1708.70 Z" fill="#fff" stroke="#1a55a8" stroke-width="1.35" stroke-linejoin="round"/>
<path d="M1715.60 1054.20 V1059.20 M1715.60 1060.10 V1061.20" stroke="#1a55a8" stroke-width="1.3" fill="none"/>
<line x1="1733.20" y1="807.40" x2="1733.20" y2="1047.60" stroke="#2a69b8" stroke-width="1.3"/>
<path d="M1733.20 1049.90 L1740.10 1062.60 H1726.30 Z" fill="#fff" stroke="#1a55a8" stroke-width="1.35" stroke-linejoin="round"/>
<path d="M1733.20 1054.20 V1059.20 M1733.20 1060.10 V1061.20" stroke="#1a55a8" stroke-width="1.3" fill="none"/>
<line x1="1750.80" y1="807.40" x2="1750.80" y2="1047.60" stroke="#2a69b8" stroke-width="1.3"/>
<path d="M1750.80 1049.90 L1757.70 1062.60 H1743.90 Z" fill="#fff" stroke="#1a55a8" stroke-width="1.35" stroke-linejoin="round"/>
<path d="M1750.80 1054.20 V1059.20 M1750.80 1060.10 V1061.20" stroke="#1a55a8" stroke-width="1.3" fill="none"/>
<line x1="1768.40" y1="807.40" x2="1768.40" y2="1047.60" stroke="#2a69b8" stroke-width="1.3"/>
<path d="M1768.40 1049.90 L1775.30 1062.60 H1761.50 Z" fill="#fff" stroke="#1a55a8" stroke-width="1.35" stroke-linejoin="round"/>
<path d="M1768.40 1054.20 V1059.20 M1768.40 1060.10 V1061.20" stroke="#1a55a8" stroke-width="1.3" fill="none"/>
<line x1="1786.00" y1="807.40" x2="1786.00" y2="1047.60" stroke="#2a69b8" stroke-width="1.3"/>
<path d="M1786.00 1049.90 L1792.90 1062.60 H1779.10 Z" fill="#fff" stroke="#1a55a8" stroke-width="1.35" stroke-linejoin="round"/>
<path d="M1786.00 1054.20 V1059.20 M1786.00 1060.10 V1061.20" stroke="#1a55a8" stroke-width="1.3" fill="none"/>
<line x1="1803.60" y1="807.40" x2="1803.60" y2="1047.60" stroke="#2a69b8" stroke-width="1.3"/>
<path d="M1803.60 1049.90 L1810.50 1062.60 H1796.70 Z" fill="#fff" stroke="#1a55a8" stroke-width="1.35" stroke-linejoin="round"/>
<path d="M1803.60 1054.20 V1059.20 M1803.60 1060.10 V1061.20" stroke="#1a55a8" stroke-width="1.3" fill="none"/>
<line x1="1821.20" y1="807.40" x2="1821.20" y2="1047.60" stroke="#2a69b8" stroke-width="1.3"/>
<path d="M1821.20 1049.90 L1828.10 1062.60 H1814.30 Z" fill="#fff" stroke="#1a55a8" stroke-width="1.35" stroke-linejoin="round"/>
<path d="M1821.20 1054.20 V1059.20 M1821.20 1060.10 V1061.20" stroke="#1a55a8" stroke-width="1.3" fill="none"/>
<line x1="1838.80" y1="807.40" x2="1838.80" y2="1047.60" stroke="#2a69b8" stroke-width="1.3"/>
<path d="M1838.80 1049.90 L1845.70 1062.60 H1831.90 Z" fill="#fff" stroke="#1a55a8" stroke-width="1.35" stroke-linejoin="round"/>
<path d="M1838.80 1054.20 V1059.20 M1838.80 1060.10 V1061.20" stroke="#1a55a8" stroke-width="1.3" fill="none"/>
<line x1="1856.40" y1="807.40" x2="1856.40" y2="1047.60" stroke="#2a69b8" stroke-width="1.3"/>
<path d="M1856.40 1049.90 L1863.30 1062.60 H1849.50 Z" fill="#fff" stroke="#1a55a8" stroke-width="1.35" stroke-linejoin="round"/>
<path d="M1856.40 1054.20 V1059.20 M1856.40 1060.10 V1061.20" stroke="#1a55a8" stroke-width="1.3" fill="none"/>
<line x1="1874.00" y1="807.40" x2="1874.00" y2="1047.60" stroke="#2a69b8" stroke-width="1.3"/>
<path d="M1874.00 1049.90 L1880.90 1062.60 H1867.10 Z" fill="#fff" stroke="#1a55a8" stroke-width="1.35" stroke-linejoin="round"/>
<path d="M1874.00 1054.20 V1059.20 M1874.00 1060.10 V1061.20" stroke="#1a55a8" stroke-width="1.3" fill="none"/>
<line x1="1891.60" y1="807.40" x2="1891.60" y2="1047.60" stroke="#2a69b8" stroke-width="1.3"/>
<path d="M1891.60 1049.90 L1898.50 1062.60 H1884.70 Z" fill="#fff" stroke="#1a55a8" stroke-width="1.35" stroke-linejoin="round"/>
<path d="M1891.60 1054.20 V1059.20 M1891.60 1060.10 V1061.20" stroke="#1a55a8" stroke-width="1.3" fill="none"/>
<line x1="1909.20" y1="807.40" x2="1909.20" y2="1047.60" stroke="#2a69b8" stroke-width="1.3"/>
<path d="M1909.20 1049.90 L1916.10 1062.60 H1902.30 Z" fill="#fff" stroke="#1a55a8" stroke-width="1.35" stroke-linejoin="round"/>
<path d="M1909.20 1054.20 V1059.20 M1909.20 1060.10 V1061.20" stroke="#1a55a8" stroke-width="1.3" fill="none"/>
<line x1="1926.80" y1="807.40" x2="1926.80" y2="1047.60" stroke="#2a69b8" stroke-width="1.3"/>
<path d="M1926.80 1049.90 L1933.70 1062.60 H1919.90 Z" fill="#fff" stroke="#1a55a8" stroke-width="1.35" stroke-linejoin="round"/>
<path d="M1926.80 1054.20 V1059.20 M1926.80 1060.10 V1061.20" stroke="#1a55a8" stroke-width="1.3" fill="none"/>
<line x1="1944.40" y1="807.40" x2="1944.40" y2="1047.60" stroke="#2a69b8" stroke-width="1.3"/>
<path d="M1944.40 1049.90 L1951.30 1062.60 H1937.50 Z" fill="#fff" stroke="#1a55a8" stroke-width="1.35" stroke-linejoin="round"/>
<path d="M1944.40 1054.20 V1059.20 M1944.40 1060.10 V1061.20" stroke="#1a55a8" stroke-width="1.3" fill="none"/>
<line x1="1962.00" y1="807.40" x2="1962.00" y2="1047.60" stroke="#2a69b8" stroke-width="1.3"/>
<path d="M1962.00 1049.90 L1968.90 1062.60 H1955.10 Z" fill="#fff" stroke="#1a55a8" stroke-width="1.35" stroke-linejoin="round"/>
<path d="M1962.00 1054.20 V1059.20 M1962.00 1060.10 V1061.20" stroke="#1a55a8" stroke-width="1.3" fill="none"/>
<line x1="1979.60" y1="807.40" x2="1979.60" y2="1047.60" stroke="#2a69b8" stroke-width="1.3"/>
<path d="M1979.60 1049.90 L1986.50 1062.60 H1972.70 Z" fill="#fff" stroke="#1a55a8" stroke-width="1.35" stroke-linejoin="round"/>
<path d="M1979.60 1054.20 V1059.20 M1979.60 1060.10 V1061.20" stroke="#1a55a8" stroke-width="1.3" fill="none"/>
<line x1="1997.20" y1="807.40" x2="1997.20" y2="1047.60" stroke="#2a69b8" stroke-width="1.3"/>
<path d="M1997.20 1049.90 L2004.10 1062.60 H1990.30 Z" fill="#fff" stroke="#1a55a8" stroke-width="1.35" stroke-linejoin="round"/>
<path d="M1997.20 1054.20 V1059.20 M1997.20 1060.10 V1061.20" stroke="#1a55a8" stroke-width="1.3" fill="none"/>
<line x1="2014.80" y1="807.40" x2="2014.80" y2="1047.60" stroke="#2a69b8" stroke-width="1.3"/>
<path d="M2014.80 1049.90 L2021.70 1062.60 H2007.90 Z" fill="#fff" stroke="#1a55a8" stroke-width="1.35" stroke-linejoin="round"/>
<path d="M2014.80 1054.20 V1059.20 M2014.80 1060.10 V1061.20" stroke="#1a55a8" stroke-width="1.3" fill="none"/>
<line x1="2032.40" y1="807.40" x2="2032.40" y2="1047.60" stroke="#2a69b8" stroke-width="1.3"/>
<path d="M2032.40 1049.90 L2039.30 1062.60 H2025.50 Z" fill="#fff" stroke="#1a55a8" stroke-width="1.35" stroke-linejoin="round"/>
<path d="M2032.40 1054.20 V1059.20 M2032.40 1060.10 V1061.20" stroke="#1a55a8" stroke-width="1.3" fill="none"/>
<line x1="2050.00" y1="807.40" x2="2050.00" y2="1047.60" stroke="#2a69b8" stroke-width="1.3"/>
<path d="M2050.00 1049.90 L2056.90 1062.60 H2043.10 Z" fill="#fff" stroke="#1a55a8" stroke-width="1.35" stroke-linejoin="round"/>
<path d="M2050.00 1054.20 V1059.20 M2050.00 1060.10 V1061.20" stroke="#1a55a8" stroke-width="1.3" fill="none"/>
<line x1="2067.60" y1="807.40" x2="2067.60" y2="1047.60" stroke="#2a69b8" stroke-width="1.3"/>
<path d="M2067.60 1049.90 L2074.50 1062.60 H2060.70 Z" fill="#fff" stroke="#1a55a8" stroke-width="1.35" stroke-linejoin="round"/>
<path d="M2067.60 1054.20 V1059.20 M2067.60 1060.10 V1061.20" stroke="#1a55a8" stroke-width="1.3" fill="none"/>
<line x1="2102.80" y1="807.40" x2="2102.80" y2="1047.60" stroke="#2a69b8" stroke-width="1.3"/>
<path d="M2102.80 1049.90 L2109.70 1062.60 H2095.90 Z" fill="#fff" stroke="#1a55a8" stroke-width="1.35" stroke-linejoin="round"/>
<path d="M2102.80 1054.20 V1059.20 M2102.80 1060.10 V1061.20" stroke="#1a55a8" stroke-width="1.3" fill="none"/>
<line x1="2120.40" y1="807.40" x2="2120.40" y2="1047.60" stroke="#2a69b8" stroke-width="1.3"/>
<path d="M2120.40 1049.90 L2127.30 1062.60 H2113.50 Z" fill="#fff" stroke="#1a55a8" stroke-width="1.35" stroke-linejoin="round"/>
<path d="M2120.40 1054.20 V1059.20 M2120.40 1060.10 V1061.20" stroke="#1a55a8" stroke-width="1.3" fill="none"/>
<line x1="2138.00" y1="807.40" x2="2138.00" y2="1047.60" stroke="#2a69b8" stroke-width="1.3"/>
<path d="M2138.00 1049.90 L2144.90 1062.60 H2131.10 Z" fill="#fff" stroke="#1a55a8" stroke-width="1.35" stroke-linejoin="round"/>
<path d="M2138.00 1054.20 V1059.20 M2138.00 1060.10 V1061.20" stroke="#1a55a8" stroke-width="1.3" fill="none"/>
<line x1="2155.60" y1="807.40" x2="2155.60" y2="1047.60" stroke="#2a69b8" stroke-width="1.3"/>
<path d="M2155.60 1049.90 L2162.50 1062.60 H2148.70 Z" fill="#fff" stroke="#1a55a8" stroke-width="1.35" stroke-linejoin="round"/>
<path d="M2155.60 1054.20 V1059.20 M2155.60 1060.10 V1061.20" stroke="#1a55a8" stroke-width="1.3" fill="none"/>
<line x1="2173.20" y1="807.40" x2="2173.20" y2="1047.60" stroke="#2a69b8" stroke-width="1.3"/>
<path d="M2173.20 1049.90 L2180.10 1062.60 H2166.30 Z" fill="#fff" stroke="#1a55a8" stroke-width="1.35" stroke-linejoin="round"/>
<path d="M2173.20 1054.20 V1059.20 M2173.20 1060.10 V1061.20" stroke="#1a55a8" stroke-width="1.3" fill="none"/>
<line x1="2190.80" y1="807.40" x2="2190.80" y2="1047.60" stroke="#2a69b8" stroke-width="1.3"/>
<path d="M2190.80 1049.90 L2197.70 1062.60 H2183.90 Z" fill="#fff" stroke="#1a55a8" stroke-width="1.35" stroke-linejoin="round"/>
<path d="M2190.80 1054.20 V1059.20 M2190.80 1060.10 V1061.20" stroke="#1a55a8" stroke-width="1.3" fill="none"/>
<line x1="2208.40" y1="807.40" x2="2208.40" y2="1047.60" stroke="#2a69b8" stroke-width="1.3"/>
<path d="M2208.40 1049.90 L2215.30 1062.60 H2201.50 Z" fill="#fff" stroke="#1a55a8" stroke-width="1.35" stroke-linejoin="round"/>
<path d="M2208.40 1054.20 V1059.20 M2208.40 1060.10 V1061.20" stroke="#1a55a8" stroke-width="1.3" fill="none"/>
<line x1="2226.00" y1="807.40" x2="2226.00" y2="1047.60" stroke="#2a69b8" stroke-width="1.3"/>
<path d="M2226.00 1049.90 L2232.90 1062.60 H2219.10 Z" fill="#fff" stroke="#1a55a8" stroke-width="1.35" stroke-linejoin="round"/>
<path d="M2226.00 1054.20 V1059.20 M2226.00 1060.10 V1061.20" stroke="#1a55a8" stroke-width="1.3" fill="none"/>
<line x1="2243.60" y1="807.40" x2="2243.60" y2="1047.60" stroke="#2a69b8" stroke-width="1.3"/>
<path d="M2243.60 1049.90 L2250.50 1062.60 H2236.70 Z" fill="#fff" stroke="#1a55a8" stroke-width="1.35" stroke-linejoin="round"/>
<path d="M2243.60 1054.20 V1059.20 M2243.60 1060.10 V1061.20" stroke="#1a55a8" stroke-width="1.3" fill="none"/>
<line x1="2261.20" y1="807.40" x2="2261.20" y2="1047.60" stroke="#2a69b8" stroke-width="1.3"/>
<path d="M2261.20 1049.90 L2268.10 1062.60 H2254.30 Z" fill="#fff" stroke="#1a55a8" stroke-width="1.35" stroke-linejoin="round"/>
<path d="M2261.20 1054.20 V1059.20 M2261.20 1060.10 V1061.20" stroke="#1a55a8" stroke-width="1.3" fill="none"/>
<line x1="2278.80" y1="807.40" x2="2278.80" y2="1047.60" stroke="#2a69b8" stroke-width="1.3"/>
<path d="M2278.80 1049.90 L2285.70 1062.60 H2271.90 Z" fill="#fff" stroke="#1a55a8" stroke-width="1.35" stroke-linejoin="round"/>
<path d="M2278.80 1054.20 V1059.20 M2278.80 1060.10 V1061.20" stroke="#1a55a8" stroke-width="1.3" fill="none"/>
<line x1="2296.40" y1="807.40" x2="2296.40" y2="1047.60" stroke="#2a69b8" stroke-width="1.3"/>
<path d="M2296.40 1049.90 L2303.30 1062.60 H2289.50 Z" fill="#fff" stroke="#1a55a8" stroke-width="1.35" stroke-linejoin="round"/>
<path d="M2296.40 1054.20 V1059.20 M2296.40 1060.10 V1061.20" stroke="#1a55a8" stroke-width="1.3" fill="none"/>
<line x1="2314.00" y1="807.40" x2="2314.00" y2="1047.60" stroke="#2a69b8" stroke-width="1.3"/>
<path d="M2314.00 1049.90 L2320.90 1062.60 H2307.10 Z" fill="#fff" stroke="#1a55a8" stroke-width="1.35" stroke-linejoin="round"/>
<path d="M2314.00 1054.20 V1059.20 M2314.00 1060.10 V1061.20" stroke="#1a55a8" stroke-width="1.3" fill="none"/>
<line x1="2331.60" y1="807.40" x2="2331.60" y2="1047.60" stroke="#2a69b8" stroke-width="1.3"/>
<path d="M2331.60 1049.90 L2338.50 1062.60 H2324.70 Z" fill="#fff" stroke="#1a55a8" stroke-width="1.35" stroke-linejoin="round"/>
<path d="M2331.60 1054.20 V1059.20 M2331.60 1060.10 V1061.20" stroke="#1a55a8" stroke-width="1.3" fill="none"/>
<line x1="2349.20" y1="807.40" x2="2349.20" y2="1047.60" stroke="#2a69b8" stroke-width="1.3"/>
<path d="M2349.20 1049.90 L2356.10 1062.60 H2342.30 Z" fill="#fff" stroke="#1a55a8" stroke-width="1.35" stroke-linejoin="round"/>
<path d="M2349.20 1054.20 V1059.20 M2349.20 1060.10 V1061.20" stroke="#1a55a8" stroke-width="1.3" fill="none"/>
</g>
<text x="1781.68" y="1100.70" font-size="13.4" font-weight="700" letter-spacing="-0.157" fill="#1a1c21">per 12 hours</text>
<circle cx="1261.10" cy="1132.90" r="4.60" fill="#2185d0"/>
<text x="1273.53" y="1136.60" font-size="13.4" letter-spacing="0.184" fill="#2f333d">Percent Delays</text>
<text x="1461.30" y="1136.60" font-size="13.4" letter-spacing="-0.054" fill="#2f333d">32.432%</text>
<rect x="1510.50" y="1442.90" width="13.10" height="92.10" fill="#b5d9f0"/>
<rect x="1510.50" y="1418.10" width="13.10" height="24.80" fill="#6dd5e5" stroke="rgba(255,255,255,.25)" stroke-width="0.6"/>
<rect x="1510.50" y="1405.70" width="13.10" height="12.40" fill="#2869b8" stroke="rgba(255,255,255,.25)" stroke-width="0.6"/>
<rect x="1510.50" y="1399.50" width="13.10" height="6.20" fill="#4d88c6" stroke="rgba(255,255,255,.25)" stroke-width="0.6"/>
<rect x="1526.14" y="1343.70" width="13.10" height="191.30" fill="#b5d9f0"/>
<rect x="1526.14" y="1331.30" width="13.10" height="12.40" fill="#2869b8" stroke="rgba(255,255,255,.25)" stroke-width="0.6"/>
<rect x="1526.14" y="1312.70" width="13.10" height="18.60" fill="#4d88c6" stroke="rgba(255,255,255,.25)" stroke-width="0.6"/>
<rect x="1526.14" y="1294.10" width="13.10" height="18.60" fill="#6bc8d8" stroke="rgba(255,255,255,.25)" stroke-width="0.6"/>
<rect x="1541.78" y="1393.30" width="13.10" height="141.70" fill="#b5d9f0"/>
<rect x="1541.78" y="1380.90" width="13.10" height="12.40" fill="#6dd5e5" stroke="rgba(255,255,255,.25)" stroke-width="0.6"/>
<rect x="1541.78" y="1374.70" width="13.10" height="6.20" fill="#2869b8" stroke="rgba(255,255,255,.25)" stroke-width="0.6"/>
<rect x="1541.78" y="1362.30" width="13.10" height="12.40" fill="#4d88c6" stroke="rgba(255,255,255,.25)" stroke-width="0.6"/>
<rect x="1557.42" y="1368.50" width="13.10" height="166.50" fill="#b5d9f0"/>
<rect x="1557.42" y="1343.70" width="13.10" height="24.80" fill="#6dd5e5" stroke="rgba(255,255,255,.25)" stroke-width="0.6"/>
<rect x="1557.42" y="1331.30" width="13.10" height="12.40" fill="#2869b8" stroke="rgba(255,255,255,.25)" stroke-width="0.6"/>
<rect x="1557.42" y="1306.50" width="13.10" height="24.80" fill="#4d88c6" stroke="rgba(255,255,255,.25)" stroke-width="0.6"/>
<rect x="1557.42" y="1294.10" width="13.10" height="12.40" fill="#10264a" stroke="rgba(255,255,255,.25)" stroke-width="0.6"/>
<rect x="1573.06" y="1318.90" width="13.10" height="216.10" fill="#b5d9f0"/>
<rect x="1573.06" y="1306.50" width="13.10" height="12.40" fill="#6dd5e5" stroke="rgba(255,255,255,.25)" stroke-width="0.6"/>
<rect x="1573.06" y="1275.50" width="13.10" height="31.00" fill="#2869b8" stroke="rgba(255,255,255,.25)" stroke-width="0.6"/>
<rect x="1573.06" y="1269.30" width="13.10" height="6.20" fill="#6bc8d8" stroke="rgba(255,255,255,.25)" stroke-width="0.6"/>
<rect x="1573.06" y="1263.10" width="13.10" height="6.20" fill="#10264a" stroke="rgba(255,255,255,.25)" stroke-width="0.6"/>
<rect x="1588.70" y="1362.30" width="13.10" height="172.70" fill="#b5d9f0"/>
<rect x="1588.70" y="1337.50" width="13.10" height="24.80" fill="#6dd5e5" stroke="rgba(255,255,255,.25)" stroke-width="0.6"/>
<rect x="1588.70" y="1306.50" width="13.10" height="31.00" fill="#2869b8" stroke="rgba(255,255,255,.25)" stroke-width="0.6"/>
<rect x="1588.70" y="1300.30" width="13.10" height="6.20" fill="#4d88c6" stroke="rgba(255,255,255,.25)" stroke-width="0.6"/>
<rect x="1604.34" y="1287.90" width="13.10" height="247.10" fill="#b5d9f0"/>
<rect x="1604.34" y="1263.10" width="13.10" height="24.80" fill="#6dd5e5" stroke="rgba(255,255,255,.25)" stroke-width="0.6"/>
<rect x="1604.34" y="1244.50" width="13.10" height="18.60" fill="#2869b8" stroke="rgba(255,255,255,.25)" stroke-width="0.6"/>
<rect x="1604.34" y="1238.30" width="13.10" height="6.20" fill="#6bc8d8" stroke="rgba(255,255,255,.25)" stroke-width="0.6"/>
<rect x="1619.98" y="1399.50" width="13.10" height="135.50" fill="#b5d9f0"/>
<rect x="1619.98" y="1380.90" width="13.10" height="18.60" fill="#6dd5e5" stroke="rgba(255,255,255,.25)" stroke-width="0.6"/>
<rect x="1619.98" y="1368.50" width="13.10" height="12.40" fill="#2869b8" stroke="rgba(255,255,255,.25)" stroke-width="0.6"/>
<rect x="1619.98" y="1362.30" width="13.10" height="6.20" fill="#4d88c6" stroke="rgba(255,255,255,.25)" stroke-width="0.6"/>
<rect x="1619.98" y="1356.10" width="13.10" height="6.20" fill="#10264a" stroke="rgba(255,255,255,.25)" stroke-width="0.6"/>
<rect x="1635.62" y="1294.10" width="13.10" height="240.90" fill="#b5d9f0"/>
<rect x="1635.62" y="1269.30" width="13.10" height="24.80" fill="#6dd5e5" stroke="rgba(255,255,255,.25)" stroke-width="0.6"/>
<rect x="1635.62" y="1256.90" width="13.10" height="12.40" fill="#2869b8" stroke="rgba(255,255,255,.25)" stroke-width="0.6"/>
<rect x="1635.62" y="1250.70" width="13.10" height="6.20" fill="#6bc8d8" stroke="rgba(255,255,255,.25)" stroke-width="0.6"/>
<rect x="1651.26" y="1356.10" width="13.10" height="178.90" fill="#b5d9f0"/>
<rect x="1651.26" y="1337.50" width="13.10" height="18.60" fill="#6dd5e5" stroke="rgba(255,255,255,.25)" stroke-width="0.6"/>
<rect x="1651.26" y="1318.90" width="13.10" height="18.60" fill="#2869b8" stroke="rgba(255,255,255,.25)" stroke-width="0.6"/>
<rect x="1651.26" y="1300.30" width="13.10" height="18.60" fill="#4d88c6" stroke="rgba(255,255,255,.25)" stroke-width="0.6"/>
<rect x="1651.26" y="1287.90" width="13.10" height="12.40" fill="#6bc8d8" stroke="rgba(255,255,255,.25)" stroke-width="0.6"/>
<rect x="1666.90" y="1318.90" width="13.10" height="216.10" fill="#b5d9f0"/>
<rect x="1666.90" y="1306.50" width="13.10" height="12.40" fill="#2869b8" stroke="rgba(255,255,255,.25)" stroke-width="0.6"/>
<rect x="1666.90" y="1287.90" width="13.10" height="18.60" fill="#4d88c6" stroke="rgba(255,255,255,.25)" stroke-width="0.6"/>
<rect x="1666.90" y="1275.50" width="13.10" height="12.40" fill="#6bc8d8" stroke="rgba(255,255,255,.25)" stroke-width="0.6"/>
<rect x="1682.54" y="1306.50" width="13.10" height="228.50" fill="#b5d9f0"/>
<rect x="1682.54" y="1300.30" width="13.10" height="6.20" fill="#6dd5e5" stroke="rgba(255,255,255,.25)" stroke-width="0.6"/>
<rect x="1682.54" y="1275.50" width="13.10" height="24.80" fill="#2869b8" stroke="rgba(255,255,255,.25)" stroke-width="0.6"/>
<rect x="1682.54" y="1250.70" width="13.10" height="24.80" fill="#4d88c6" stroke="rgba(255,255,255,.25)" stroke-width="0.6"/>
<rect x="1682.54" y="1238.30" width="13.10" height="12.40" fill="#10264a" stroke="rgba(255,255,255,.25)" stroke-width="0.6"/>
<rect x="1698.18" y="1325.10" width="13.10" height="209.90" fill="#b5d9f0"/>
<rect x="1698.18" y="1318.90" width="13.10" height="6.20" fill="#6dd5e5" stroke="rgba(255,255,255,.25)" stroke-width="0.6"/>
<rect x="1698.18" y="1306.50" width="13.10" height="12.40" fill="#2869b8" stroke="rgba(255,255,255,.25)" stroke-width="0.6"/>
<rect x="1698.18" y="1281.70" width="13.10" height="24.80" fill="#4d88c6" stroke="rgba(255,255,255,.25)" stroke-width="0.6"/>
<rect x="1698.18" y="1275.50" width="13.10" height="6.20" fill="#10264a" stroke="rgba(255,255,255,.25)" stroke-width="0.6"/>
<rect x="1713.82" y="1393.30" width="13.10" height="141.70" fill="#b5d9f0"/>
<rect x="1713.82" y="1374.70" width="13.10" height="18.60" fill="#6dd5e5" stroke="rgba(255,255,255,.25)" stroke-width="0.6"/>
<rect x="1713.82" y="1362.30" width="13.10" height="12.40" fill="#2869b8" stroke="rgba(255,255,255,.25)" stroke-width="0.6"/>
<rect x="1713.82" y="1356.10" width="13.10" height="6.20" fill="#6bc8d8" stroke="rgba(255,255,255,.25)" stroke-width="0.6"/>
<rect x="1729.46" y="1393.30" width="13.10" height="141.70" fill="#b5d9f0"/>
<rect x="1729.46" y="1356.10" width="13.10" height="37.20" fill="#6dd5e5" stroke="rgba(255,255,255,.25)" stroke-width="0.6"/>
<rect x="1729.46" y="1331.30" width="13.10" height="24.80" fill="#2869b8" stroke="rgba(255,255,255,.25)" stroke-width="0.6"/>
<rect x="1729.46" y="1325.10" width="13.10" height="6.20" fill="#4d88c6" stroke="rgba(255,255,255,.25)" stroke-width="0.6"/>
<rect x="1729.46" y="1306.50" width="13.10" height="18.60" fill="#6bc8d8" stroke="rgba(255,255,255,.25)" stroke-width="0.6"/>
<rect x="1745.10" y="1362.30" width="13.10" height="172.70" fill="#b5d9f0"/>
<rect x="1745.10" y="1343.70" width="13.10" height="18.60" fill="#6dd5e5" stroke="rgba(255,255,255,.25)" stroke-width="0.6"/>
<rect x="1745.10" y="1331.30" width="13.10" height="12.40" fill="#2869b8" stroke="rgba(255,255,255,.25)" stroke-width="0.6"/>
<rect x="1745.10" y="1325.10" width="13.10" height="6.20" fill="#10264a" stroke="rgba(255,255,255,.25)" stroke-width="0.6"/>
<rect x="1760.74" y="1368.50" width="13.10" height="166.50" fill="#b5d9f0"/>
<rect x="1760.74" y="1356.10" width="13.10" height="12.40" fill="#6dd5e5" stroke="rgba(255,255,255,.25)" stroke-width="0.6"/>
<rect x="1760.74" y="1337.50" width="13.10" height="18.60" fill="#2869b8" stroke="rgba(255,255,255,.25)" stroke-width="0.6"/>
<rect x="1760.74" y="1312.70" width="13.10" height="24.80" fill="#4d88c6" stroke="rgba(255,255,255,.25)" stroke-width="0.6"/>
<rect x="1760.74" y="1306.50" width="13.10" height="6.20" fill="#10264a" stroke="rgba(255,255,255,.25)" stroke-width="0.6"/>
<rect x="1776.38" y="1356.10" width="13.10" height="178.90" fill="#b5d9f0"/>
<rect x="1776.38" y="1337.50" width="13.10" height="18.60" fill="#6dd5e5" stroke="rgba(255,255,255,.25)" stroke-width="0.6"/>
<rect x="1776.38" y="1318.90" width="13.10" height="18.60" fill="#2869b8" stroke="rgba(255,255,255,.25)" stroke-width="0.6"/>
<rect x="1776.38" y="1294.10" width="13.10" height="24.80" fill="#4d88c6" stroke="rgba(255,255,255,.25)" stroke-width="0.6"/>
<rect x="1776.38" y="1281.70" width="13.10" height="12.40" fill="#6bc8d8" stroke="rgba(255,255,255,.25)" stroke-width="0.6"/>
<rect x="1792.02" y="1362.30" width="13.10" height="172.70" fill="#b5d9f0"/>
<rect x="1792.02" y="1331.30" width="13.10" height="31.00" fill="#6dd5e5" stroke="rgba(255,255,255,.25)" stroke-width="0.6"/>
<rect x="1792.02" y="1318.90" width="13.10" height="12.40" fill="#2869b8" stroke="rgba(255,255,255,.25)" stroke-width="0.6"/>
<rect x="1792.02" y="1300.30" width="13.10" height="18.60" fill="#4d88c6" stroke="rgba(255,255,255,.25)" stroke-width="0.6"/>
<rect x="1807.66" y="1325.10" width="13.10" height="209.90" fill="#b5d9f0"/>
<rect x="1807.66" y="1318.90" width="13.10" height="6.20" fill="#6dd5e5" stroke="rgba(255,255,255,.25)" stroke-width="0.6"/>
<rect x="1807.66" y="1287.90" width="13.10" height="31.00" fill="#2869b8" stroke="rgba(255,255,255,.25)" stroke-width="0.6"/>
<rect x="1807.66" y="1281.70" width="13.10" height="6.20" fill="#4d88c6" stroke="rgba(255,255,255,.25)" stroke-width="0.6"/>
<rect x="1823.30" y="1306.50" width="13.10" height="228.50" fill="#b5d9f0"/>
<rect x="1823.30" y="1287.90" width="13.10" height="18.60" fill="#6dd5e5" stroke="rgba(255,255,255,.25)" stroke-width="0.6"/>
<rect x="1823.30" y="1281.70" width="13.10" height="6.20" fill="#2869b8" stroke="rgba(255,255,255,.25)" stroke-width="0.6"/>
<rect x="1823.30" y="1256.90" width="13.10" height="24.80" fill="#4d88c6" stroke="rgba(255,255,255,.25)" stroke-width="0.6"/>
<rect x="1823.30" y="1244.50" width="13.10" height="12.40" fill="#10264a" stroke="rgba(255,255,255,.25)" stroke-width="0.6"/>
<rect x="1838.94" y="1343.70" width="13.10" height="191.30" fill="#b5d9f0"/>
<rect x="1838.94" y="1337.50" width="13.10" height="6.20" fill="#6dd5e5" stroke="rgba(255,255,255,.25)" stroke-width="0.6"/>
<rect x="1838.94" y="1318.90" width="13.10" height="18.60" fill="#2869b8" stroke="rgba(255,255,255,.25)" stroke-width="0.6"/>
<rect x="1838.94" y="1306.50" width="13.10" height="12.40" fill="#4d88c6" stroke="rgba(255,255,255,.25)" stroke-width="0.6"/>
<rect x="1838.94" y="1294.10" width="13.10" height="12.40" fill="#6bc8d8" stroke="rgba(255,255,255,.25)" stroke-width="0.6"/>
<rect x="1854.58" y="1325.10" width="13.10" height="209.90" fill="#b5d9f0"/>
<rect x="1854.58" y="1306.50" width="13.10" height="18.60" fill="#6dd5e5" stroke="rgba(255,255,255,.25)" stroke-width="0.6"/>
<rect x="1854.58" y="1294.10" width="13.10" height="12.40" fill="#2869b8" stroke="rgba(255,255,255,.25)" stroke-width="0.6"/>
<rect x="1854.58" y="1275.50" width="13.10" height="18.60" fill="#4d88c6" stroke="rgba(255,255,255,.25)" stroke-width="0.6"/>
<rect x="1854.58" y="1263.10" width="13.10" height="12.40" fill="#6bc8d8" stroke="rgba(255,255,255,.25)" stroke-width="0.6"/>
<rect x="1870.22" y="1349.90" width="13.10" height="185.10" fill="#b5d9f0"/>
<rect x="1870.22" y="1343.70" width="13.10" height="6.20" fill="#6dd5e5" stroke="rgba(255,255,255,.25)" stroke-width="0.6"/>
<rect x="1870.22" y="1325.10" width="13.10" height="18.60" fill="#2869b8" stroke="rgba(255,255,255,.25)" stroke-width="0.6"/>
<rect x="1885.86" y="1399.50" width="13.10" height="135.50" fill="#b5d9f0"/>
<rect x="1885.86" y="1362.30" width="13.10" height="37.20" fill="#2869b8" stroke="rgba(255,255,255,.25)" stroke-width="0.6"/>
<rect x="1885.86" y="1343.70" width="13.10" height="18.60" fill="#4d88c6" stroke="rgba(255,255,255,.25)" stroke-width="0.6"/>
<rect x="1901.50" y="1374.70" width="13.10" height="160.30" fill="#b5d9f0"/>
<rect x="1901.50" y="1343.70" width="13.10" height="31.00" fill="#6dd5e5" stroke="rgba(255,255,255,.25)" stroke-width="0.6"/>
<rect x="1901.50" y="1331.30" width="13.10" height="12.40" fill="#2869b8" stroke="rgba(255,255,255,.25)" stroke-width="0.6"/>
<rect x="1901.50" y="1306.50" width="13.10" height="24.80" fill="#4d88c6" stroke="rgba(255,255,255,.25)" stroke-width="0.6"/>
<rect x="1901.50" y="1294.10" width="13.10" height="12.40" fill="#6bc8d8" stroke="rgba(255,255,255,.25)" stroke-width="0.6"/>
<rect x="1917.14" y="1374.70" width="13.10" height="160.30" fill="#b5d9f0"/>
<rect x="1917.14" y="1362.30" width="13.10" height="12.40" fill="#6dd5e5" stroke="rgba(255,255,255,.25)" stroke-width="0.6"/>
<rect x="1917.14" y="1349.90" width="13.10" height="12.40" fill="#4d88c6" stroke="rgba(255,255,255,.25)" stroke-width="0.6"/>
<rect x="1917.14" y="1337.50" width="13.10" height="12.40" fill="#6bc8d8" stroke="rgba(255,255,255,.25)" stroke-width="0.6"/>
<rect x="1917.14" y="1331.30" width="13.10" height="6.20" fill="#10264a" stroke="rgba(255,255,255,.25)" stroke-width="0.6"/>
<rect x="1932.78" y="1455.30" width="13.10" height="79.70" fill="#b5d9f0"/>
<rect x="1932.78" y="1442.90" width="13.10" height="12.40" fill="#6dd5e5" stroke="rgba(255,255,255,.25)" stroke-width="0.6"/>
<rect x="1932.78" y="1436.70" width="13.10" height="6.20" fill="#2869b8" stroke="rgba(255,255,255,.25)" stroke-width="0.6"/>
<rect x="1932.78" y="1411.90" width="13.10" height="24.80" fill="#4d88c6" stroke="rgba(255,255,255,.25)" stroke-width="0.6"/>
<rect x="1932.78" y="1405.70" width="13.10" height="6.20" fill="#10264a" stroke="rgba(255,255,255,.25)" stroke-width="0.6"/>
<rect x="1948.42" y="1374.70" width="13.10" height="160.30" fill="#b5d9f0"/>
<rect x="1948.42" y="1362.30" width="13.10" height="12.40" fill="#6dd5e5" stroke="rgba(255,255,255,.25)" stroke-width="0.6"/>
<rect x="1948.42" y="1343.70" width="13.10" height="18.60" fill="#2869b8" stroke="rgba(255,255,255,.25)" stroke-width="0.6"/>
<rect x="1948.42" y="1331.30" width="13.10" height="12.40" fill="#6bc8d8" stroke="rgba(255,255,255,.25)" stroke-width="0.6"/>
<rect x="1948.42" y="1325.10" width="13.10" height="6.20" fill="#10264a" stroke="rgba(255,255,255,.25)" stroke-width="0.6"/>
<rect x="1964.06" y="1300.30" width="13.10" height="234.70" fill="#b5d9f0"/>
<rect x="1964.06" y="1294.10" width="13.10" height="6.20" fill="#6dd5e5" stroke="rgba(255,255,255,.25)" stroke-width="0.6"/>
<rect x="1964.06" y="1287.90" width="13.10" height="6.20" fill="#2869b8" stroke="rgba(255,255,255,.25)" stroke-width="0.6"/>
<rect x="1964.06" y="1275.50" width="13.10" height="12.40" fill="#4d88c6" stroke="rgba(255,255,255,.25)" stroke-width="0.6"/>
<rect x="1964.06" y="1263.10" width="13.10" height="12.40" fill="#6bc8d8" stroke="rgba(255,255,255,.25)" stroke-width="0.6"/>
<rect x="1979.70" y="1337.50" width="13.10" height="197.50" fill="#b5d9f0"/>
<rect x="1979.70" y="1318.90" width="13.10" height="18.60" fill="#6dd5e5" stroke="rgba(255,255,255,.25)" stroke-width="0.6"/>
<rect x="1979.70" y="1312.70" width="13.10" height="6.20" fill="#2869b8" stroke="rgba(255,255,255,.25)" stroke-width="0.6"/>
<rect x="1979.70" y="1300.30" width="13.10" height="12.40" fill="#4d88c6" stroke="rgba(255,255,255,.25)" stroke-width="0.6"/>
<rect x="1995.34" y="1331.30" width="13.10" height="203.70" fill="#b5d9f0"/>
<rect x="1995.34" y="1325.10" width="13.10" height="6.20" fill="#6dd5e5" stroke="rgba(255,255,255,.25)" stroke-width="0.6"/>
<rect x="1995.34" y="1306.50" width="13.10" height="18.60" fill="#2869b8" stroke="rgba(255,255,255,.25)" stroke-width="0.6"/>
<rect x="1995.34" y="1287.90" width="13.10" height="18.60" fill="#4d88c6" stroke="rgba(255,255,255,.25)" stroke-width="0.6"/>
<rect x="1995.34" y="1275.50" width="13.10" height="12.40" fill="#6bc8d8" stroke="rgba(255,255,255,.25)" stroke-width="0.6"/>
<rect x="2010.98" y="1356.10" width="13.10" height="178.90" fill="#b5d9f0"/>
<rect x="2010.98" y="1343.70" width="13.10" height="12.40" fill="#6dd5e5" stroke="rgba(255,255,255,.25)" stroke-width="0.6"/>
<rect x="2010.98" y="1312.70" width="13.10" height="31.00" fill="#2869b8" stroke="rgba(255,255,255,.25)" stroke-width="0.6"/>
<rect x="2010.98" y="1300.30" width="13.10" height="12.40" fill="#4d88c6" stroke="rgba(255,255,255,.25)" stroke-width="0.6"/>
<rect x="2026.62" y="1380.90" width="13.10" height="154.10" fill="#b5d9f0"/>
<rect x="2026.62" y="1356.10" width="13.10" height="24.80" fill="#6dd5e5" stroke="rgba(255,255,255,.25)" stroke-width="0.6"/>
<rect x="2026.62" y="1337.50" width="13.10" height="18.60" fill="#2869b8" stroke="rgba(255,255,255,.25)" stroke-width="0.6"/>
<rect x="2026.62" y="1331.30" width="13.10" height="6.20" fill="#4d88c6" stroke="rgba(255,255,255,.25)" stroke-width="0.6"/>
<rect x="2026.62" y="1325.10" width="13.10" height="6.20" fill="#10264a" stroke="rgba(255,255,255,.25)" stroke-width="0.6"/>
<rect x="2042.26" y="1306.50" width="13.10" height="228.50" fill="#b5d9f0"/>
<rect x="2042.26" y="1275.50" width="13.10" height="31.00" fill="#6dd5e5" stroke="rgba(255,255,255,.25)" stroke-width="0.6"/>
<rect x="2042.26" y="1244.50" width="13.10" height="31.00" fill="#2869b8" stroke="rgba(255,255,255,.25)" stroke-width="0.6"/>
<rect x="2042.26" y="1232.10" width="13.10" height="12.40" fill="#4d88c6" stroke="rgba(255,255,255,.25)" stroke-width="0.6"/>
<rect x="2042.26" y="1225.90" width="13.10" height="6.20" fill="#10264a" stroke="rgba(255,255,255,.25)" stroke-width="0.6"/>
<rect x="2057.90" y="1368.50" width="13.10" height="166.50" fill="#b5d9f0"/>
<rect x="2057.90" y="1331.30" width="13.10" height="37.20" fill="#6dd5e5" stroke="rgba(255,255,255,.25)" stroke-width="0.6"/>
<rect x="2057.90" y="1306.50" width="13.10" height="24.80" fill="#2869b8" stroke="rgba(255,255,255,.25)" stroke-width="0.6"/>
<rect x="2057.90" y="1281.70" width="13.10" height="24.80" fill="#4d88c6" stroke="rgba(255,255,255,.25)" stroke-width="0.6"/>
<rect x="2073.54" y="1393.30" width="13.10" height="141.70" fill="#b5d9f0"/>
<rect x="2073.54" y="1380.90" width="13.10" height="12.40" fill="#6dd5e5" stroke="rgba(255,255,255,.25)" stroke-width="0.6"/>
<rect x="2073.54" y="1356.10" width="13.10" height="24.80" fill="#2869b8" stroke="rgba(255,255,255,.25)" stroke-width="0.6"/>
<rect x="2073.54" y="1343.70" width="13.10" height="12.40" fill="#4d88c6" stroke="rgba(255,255,255,.25)" stroke-width="0.6"/>
<rect x="2073.54" y="1337.50" width="13.10" height="6.20" fill="#6bc8d8" stroke="rgba(255,255,255,.25)" stroke-width="0.6"/>
<rect x="2089.18" y="1337.50" width="13.10" height="197.50" fill="#b5d9f0"/>
<rect x="2089.18" y="1306.50" width="13.10" height="31.00" fill="#6dd5e5" stroke="rgba(255,255,255,.25)" stroke-width="0.6"/>
<rect x="2089.18" y="1300.30" width="13.10" height="6.20" fill="#2869b8" stroke="rgba(255,255,255,.25)" stroke-width="0.6"/>
<rect x="2089.18" y="1287.90" width="13.10" height="12.40" fill="#4d88c6" stroke="rgba(255,255,255,.25)" stroke-width="0.6"/>
<rect x="2089.18" y="1281.70" width="13.10" height="6.20" fill="#10264a" stroke="rgba(255,255,255,.25)" stroke-width="0.6"/>
<rect x="2104.82" y="1349.90" width="13.10" height="185.10" fill="#b5d9f0"/>
<rect x="2104.82" y="1325.10" width="13.10" height="24.80" fill="#6dd5e5" stroke="rgba(255,255,255,.25)" stroke-width="0.6"/>
<rect x="2104.82" y="1312.70" width="13.10" height="12.40" fill="#2869b8" stroke="rgba(255,255,255,.25)" stroke-width="0.6"/>
<rect x="2104.82" y="1287.90" width="13.10" height="24.80" fill="#4d88c6" stroke="rgba(255,255,255,.25)" stroke-width="0.6"/>
<rect x="2104.82" y="1269.30" width="13.10" height="18.60" fill="#6bc8d8" stroke="rgba(255,255,255,.25)" stroke-width="0.6"/>
<rect x="2120.46" y="1356.10" width="13.10" height="178.90" fill="#b5d9f0"/>
<rect x="2120.46" y="1343.70" width="13.10" height="12.40" fill="#6dd5e5" stroke="rgba(255,255,255,.25)" stroke-width="0.6"/>
<rect x="2120.46" y="1337.50" width="13.10" height="6.20" fill="#2869b8" stroke="rgba(255,255,255,.25)" stroke-width="0.6"/>
<rect x="2120.46" y="1331.30" width="13.10" height="6.20" fill="#4d88c6" stroke="rgba(255,255,255,.25)" stroke-width="0.6"/>
<rect x="2120.46" y="1325.10" width="13.10" height="6.20" fill="#10264a" stroke="rgba(255,255,255,.25)" stroke-width="0.6"/>
<rect x="2136.10" y="1393.30" width="13.10" height="141.70" fill="#b5d9f0"/>
<rect x="2136.10" y="1362.30" width="13.10" height="31.00" fill="#6dd5e5" stroke="rgba(255,255,255,.25)" stroke-width="0.6"/>
<rect x="2136.10" y="1343.70" width="13.10" height="18.60" fill="#2869b8" stroke="rgba(255,255,255,.25)" stroke-width="0.6"/>
<rect x="2136.10" y="1318.90" width="13.10" height="24.80" fill="#4d88c6" stroke="rgba(255,255,255,.25)" stroke-width="0.6"/>
<rect x="2151.74" y="1380.90" width="13.10" height="154.10" fill="#b5d9f0"/>
<rect x="2151.74" y="1374.70" width="13.10" height="6.20" fill="#6dd5e5" stroke="rgba(255,255,255,.25)" stroke-width="0.6"/>
<rect x="2151.74" y="1362.30" width="13.10" height="12.40" fill="#2869b8" stroke="rgba(255,255,255,.25)" stroke-width="0.6"/>
<rect x="2151.74" y="1349.90" width="13.10" height="12.40" fill="#10264a" stroke="rgba(255,255,255,.25)" stroke-width="0.6"/>
<rect x="2167.38" y="1349.90" width="13.10" height="185.10" fill="#b5d9f0"/>
<rect x="2167.38" y="1337.50" width="13.10" height="12.40" fill="#6dd5e5" stroke="rgba(255,255,255,.25)" stroke-width="0.6"/>
<rect x="2167.38" y="1325.10" width="13.10" height="12.40" fill="#2869b8" stroke="rgba(255,255,255,.25)" stroke-width="0.6"/>
<rect x="2167.38" y="1306.50" width="13.10" height="18.60" fill="#4d88c6" stroke="rgba(255,255,255,.25)" stroke-width="0.6"/>
<rect x="2167.38" y="1300.30" width="13.10" height="6.20" fill="#6bc8d8" stroke="rgba(255,255,255,.25)" stroke-width="0.6"/>
<rect x="2183.02" y="1300.30" width="13.10" height="234.70" fill="#b5d9f0"/>
<rect x="2183.02" y="1287.90" width="13.10" height="12.40" fill="#6dd5e5" stroke="rgba(255,255,255,.25)" stroke-width="0.6"/>
<rect x="2183.02" y="1269.30" width="13.10" height="18.60" fill="#2869b8" stroke="rgba(255,255,255,.25)" stroke-width="0.6"/>
<rect x="2183.02" y="1256.90" width="13.10" height="12.40" fill="#4d88c6" stroke="rgba(255,255,255,.25)" stroke-width="0.6"/>
<rect x="2183.02" y="1232.10" width="13.10" height="24.80" fill="#10264a" stroke="rgba(255,255,255,.25)" stroke-width="0.6"/>
<rect x="2198.66" y="1325.10" width="13.10" height="209.90" fill="#b5d9f0"/>
<rect x="2198.66" y="1318.90" width="13.10" height="6.20" fill="#6dd5e5" stroke="rgba(255,255,255,.25)" stroke-width="0.6"/>
<rect x="2198.66" y="1312.70" width="13.10" height="6.20" fill="#2869b8" stroke="rgba(255,255,255,.25)" stroke-width="0.6"/>
<rect x="2198.66" y="1306.50" width="13.10" height="6.20" fill="#4d88c6" stroke="rgba(255,255,255,.25)" stroke-width="0.6"/>
<rect x="2198.66" y="1300.30" width="13.10" height="6.20" fill="#6bc8d8" stroke="rgba(255,255,255,.25)" stroke-width="0.6"/>
<rect x="2214.30" y="1380.90" width="13.10" height="154.10" fill="#b5d9f0"/>
<rect x="2214.30" y="1374.70" width="13.10" height="6.20" fill="#6dd5e5" stroke="rgba(255,255,255,.25)" stroke-width="0.6"/>
<rect x="2214.30" y="1349.90" width="13.10" height="24.80" fill="#2869b8" stroke="rgba(255,255,255,.25)" stroke-width="0.6"/>
<rect x="2214.30" y="1318.90" width="13.10" height="31.00" fill="#4d88c6" stroke="rgba(255,255,255,.25)" stroke-width="0.6"/>
<rect x="2214.30" y="1312.70" width="13.10" height="6.20" fill="#10264a" stroke="rgba(255,255,255,.25)" stroke-width="0.6"/>
<rect x="2229.94" y="1312.70" width="13.10" height="222.30" fill="#b5d9f0"/>
<rect x="2229.94" y="1281.70" width="13.10" height="31.00" fill="#6dd5e5" stroke="rgba(255,255,255,.25)" stroke-width="0.6"/>
<rect x="2229.94" y="1256.90" width="13.10" height="24.80" fill="#2869b8" stroke="rgba(255,255,255,.25)" stroke-width="0.6"/>
<rect x="2229.94" y="1244.50" width="13.10" height="12.40" fill="#4d88c6" stroke="rgba(255,255,255,.25)" stroke-width="0.6"/>
<rect x="2229.94" y="1238.30" width="13.10" height="6.20" fill="#6bc8d8" stroke="rgba(255,255,255,.25)" stroke-width="0.6"/>
<line x1="1276.00" y1="1224.90" x2="1276.00" y2="1542.60" stroke="#d3d3d3" stroke-width="2"/>
<line x1="1269.60" y1="1536.00" x2="2245.60" y2="1536.00" stroke="#d3d3d3" stroke-width="2"/>
<line x1="2244.60" y1="1226.00" x2="2244.60" y2="1542.60" stroke="#e6e6e6" stroke-width="1.4"/>
<line x1="2244.60" y1="1536.00" x2="2244.60" y2="1542.60" stroke="#d3d3d3" stroke-width="2"/>
<line x1="1269.60" y1="1535.90" x2="1276.00" y2="1535.90" stroke="#d3d3d3" stroke-width="2"/>
<text x="1258.88" y="1540.20" font-size="12.6" fill="#5f6777">0</text>
<line x1="1269.60" y1="1473.90" x2="1276.00" y2="1473.90" stroke="#d3d3d3" stroke-width="1"/>
<text x="1252.97" y="1478.20" font-size="11.718" letter-spacing="-0.139" fill="#5f6777">10</text>
<line x1="1269.60" y1="1411.90" x2="1276.00" y2="1411.90" stroke="#d3d3d3" stroke-width="1"/>
<text x="1251.07" y="1416.20" font-size="12.6" letter-spacing="0.816" fill="#5f6777">20</text>
<line x1="1269.60" y1="1349.90" x2="1276.00" y2="1349.90" stroke="#d3d3d3" stroke-width="1"/>
<text x="1251.23" y="1354.20" font-size="12.6" letter-spacing="0.659" fill="#5f6777">30</text>
<line x1="1269.60" y1="1287.90" x2="1276.00" y2="1287.90" stroke="#d3d3d3" stroke-width="1"/>
<text x="1251.42" y="1292.20" font-size="12.6" letter-spacing="0.470" fill="#5f6777">40</text>
<line x1="1269.60" y1="1225.90" x2="1276.00" y2="1225.90" stroke="#d3d3d3" stroke-width="2"/>
<text x="1251.20" y="1230.20" font-size="12.6" letter-spacing="0.690" fill="#5f6777">50</text>
<line x1="1338.20" y1="1536.00" x2="1338.20" y2="1542.40" stroke="#d3d3d3" stroke-width="1"/>
<text x="1286.77" y="1554.70" font-size="12.6" letter-spacing="0.215" fill="#5f6777">2023-01-03 00:00</text>
<line x1="1463.30" y1="1536.00" x2="1463.30" y2="1542.40" stroke="#d3d3d3" stroke-width="1"/>
<text x="1411.87" y="1554.70" font-size="12.6" letter-spacing="0.215" fill="#5f6777">2023-01-07 00:00</text>
<line x1="1588.40" y1="1536.00" x2="1588.40" y2="1542.40" stroke="#d3d3d3" stroke-width="1"/>
<text x="1536.97" y="1554.70" font-size="12.6" letter-spacing="0.278" fill="#5f6777">2023-01-11 00:00</text>
<line x1="1713.50" y1="1536.00" x2="1713.50" y2="1542.40" stroke="#d3d3d3" stroke-width="1"/>
<text x="1662.07" y="1554.70" font-size="12.6" letter-spacing="0.215" fill="#5f6777">2023-01-15 00:00</text>
<line x1="1838.60" y1="1536.00" x2="1838.60" y2="1542.40" stroke="#d3d3d3" stroke-width="1"/>
<text x="1787.17" y="1554.70" font-size="12.6" letter-spacing="0.215" fill="#5f6777">2023-01-19 00:00</text>
<line x1="1963.70" y1="1536.00" x2="1963.70" y2="1542.40" stroke="#d3d3d3" stroke-width="1"/>
<text x="1912.27" y="1554.70" font-size="12.6" letter-spacing="0.215" fill="#5f6777">2023-01-23 00:00</text>
<line x1="2088.80" y1="1536.00" x2="2088.80" y2="1542.40" stroke="#d3d3d3" stroke-width="1"/>
<text x="2037.37" y="1554.70" font-size="12.6" letter-spacing="0.215" fill="#5f6777">2023-01-27 00:00</text>
<text x="1684.56" y="1573.00" font-size="13.6" font-weight="700" letter-spacing="-0.027" fill="#535966">timestamp per 12 hours</text>
<text transform="translate(1239.50 1400.29) rotate(-90)" font-size="13.6" font-weight="700" letter-spacing="0.027" fill="#535966">Count</text>
<circle cx="2260.50" cy="1227.80" r="6.60" fill="#b5d9f0"/>
<text x="2273.30" y="1231.80" font-size="13.7" letter-spacing="-0.064" fill="#2a2e38">No Delay</text>
<circle cx="2260.50" cy="1254.00" r="6.60" fill="#6dd5e5"/>
<text x="2273.30" y="1258.00" font-size="13.7" letter-spacing="-0.237" fill="#2a2e38">NAS Delay</text>
<circle cx="2260.50" cy="1280.30" r="6.60" fill="#2869b8"/>
<text x="2273.30" y="1284.30" font-size="13.7" letter-spacing="0.148" fill="#2a2e38">Late Aircraft Delay</text>
<circle cx="2260.50" cy="1306.80" r="6.60" fill="#4d88c6"/>
<text x="2273.72" y="1310.80" font-size="13.7" letter-spacing="-0.034" fill="#2a2e38">Carrier Delay</text>
<circle cx="2260.50" cy="1333.40" r="6.60" fill="#6bc8d8"/>
<text x="2274.37" y="1337.40" font-size="13.7" letter-spacing="-0.110" fill="#2a2e38">Weather Delay</text>
<circle cx="2260.50" cy="1359.90" r="6.60" fill="#10264a"/>
<text x="2273.78" y="1363.90" font-size="13.7" letter-spacing="0.014" fill="#2a2e38">Security Delay</text>
</svg>
</div></body></html>
